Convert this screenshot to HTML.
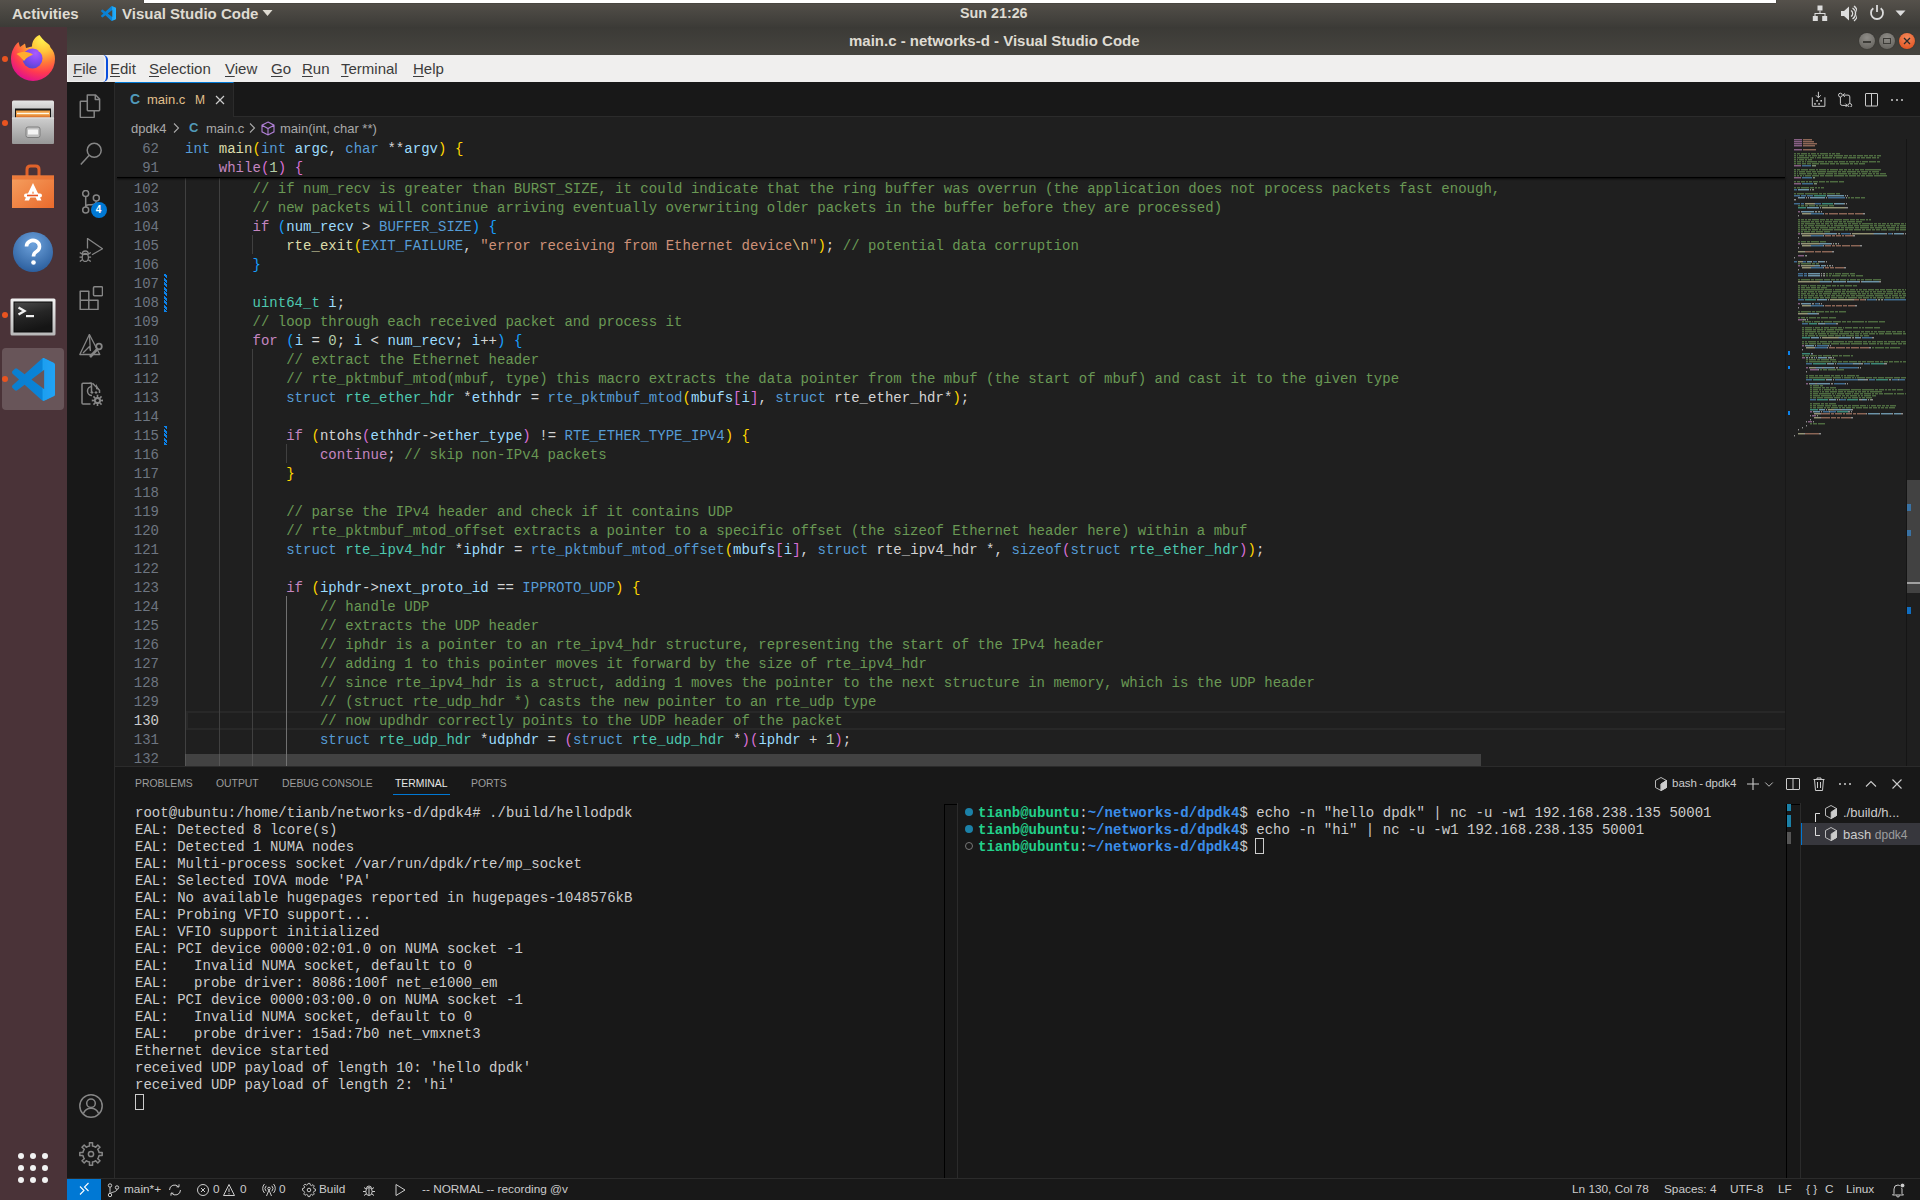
<!DOCTYPE html><html><head><meta charset="utf-8"><style>
*{margin:0;padding:0;box-sizing:border-box}
body{width:1920px;height:1200px;overflow:hidden;background:#1f1f1f;position:relative;font-family:"Liberation Sans",sans-serif}
.a{position:absolute}
.ln{position:absolute;left:118px;width:41px;text-align:right;font-family:"Liberation Mono",monospace;font-size:14px;line-height:19px;height:19px;white-space:pre}
.cl{position:absolute;left:185px;font-family:"Liberation Mono",monospace;font-size:14px;line-height:19px;height:19px;white-space:pre;letter-spacing:0.03px}
.tl{position:absolute;font-family:"Liberation Mono",monospace;font-size:14px;line-height:17px;height:17px;white-space:pre;color:#cccccc;letter-spacing:0.03px}
.ig{position:absolute;width:1px;background:#404040}
</style></head><body>
<div class="a" style="left:0;top:0;width:1920px;height:27px;background:linear-gradient(#55514b,#3c3b37)"></div>
<div class="a" style="left:144px;top:0;width:1632px;height:3px;background:#ffffff;box-shadow:0 0 1px #000"></div>
<div class="a" style="left:12px;top:5px;font-size:15px;font-weight:bold;color:#dfdbd2">Activities</div>
<svg class="a" style="left:101px;top:6px" width="15" height="15" viewBox="0 0 100 100"><defs><linearGradient id="vsg" x1="0" y1="0" x2="1" y2="0"><stop offset="0" stop-color="#0a7fd0"/><stop offset="0.7" stop-color="#0a84d8"/><stop offset="0.72" stop-color="#1aa0f0"/><stop offset="1" stop-color="#24b0ff"/></linearGradient></defs><path d="M96.5 10.8L75.9.9c-2.4-1.2-5.2-.7-7.1 1.2L29.4 38 12.2 25c-1.6-1.2-3.8-1.1-5.3.2L1.4 30.2c-1.8 1.7-1.8 4.5 0 6.2L16.3 50 1.4 63.6c-1.8 1.7-1.8 4.5 0 6.2l5.5 5c1.5 1.4 3.7 1.5 5.3.2l17.2-13L68.8 97.9c1.9 1.9 4.7 2.4 7.1 1.2l20.6-9.9c2.2-1 3.5-3.2 3.5-5.6V16.4c0-2.4-1.4-4.6-3.5-5.6zM75 72.7L45.1 50 75 27.3v45.4z" fill="url(#vsg)"/></svg>
<div class="a" style="left:122px;top:5px;font-size:15px;font-weight:bold;color:#dfdbd2">Visual Studio Code</div>
<svg class="a" style="left:262px;top:9px" width="11" height="8" viewBox="0 0 11 8"><path d="M0.5 1h10L5.5 7z" fill="#dfdbd2"/></svg>
<div class="a" style="left:960px;top:5px;font-size:14.3px;font-weight:bold;color:#dfdbd2">Sun 21:26</div>
<svg class="a" style="left:1812px;top:5px" width="16" height="17" viewBox="0 0 16 17" fill="#dcdcdc"><rect x="5.5" y="0.5" width="5" height="5"/><rect x="0.8" y="11" width="5" height="5"/><rect x="10.2" y="11" width="5" height="5"/><path d="M7.5 5.5h1V8h5v3h-1V9h-9v2h-1V8h5z"/></svg>
<svg class="a" style="left:1840px;top:5px" width="17" height="17" viewBox="0 0 17 17" fill="#dcdcdc"><path d="M1 6h3l5-4.5v14L4 11H1z"/><path d="M11 5.5a3.5 3.5 0 0 1 0 6" stroke="#dcdcdc" stroke-width="1.3" fill="none"/><path d="M12.5 3a6.5 6.5 0 0 1 0 11" stroke="#dcdcdc" stroke-width="1.3" fill="none"/><path d="M14 1a9.5 9.5 0 0 1 0 15" stroke="#dcdcdc" stroke-width="1.3" fill="none"/></svg>
<svg class="a" style="left:1869px;top:4px" width="16" height="18" viewBox="0 0 16 18" fill="none" stroke="#dcdcdc" stroke-width="1.8"><path d="M8 1v7"/><path d="M4.3 4.3a6 6 0 1 0 7.4 0"/></svg>
<svg class="a" style="left:1895px;top:10px" width="11" height="7" viewBox="0 0 11 7"><path d="M0.5 0.5h10L5.5 6z" fill="#dcdcdc"/></svg>
<div class="a" style="left:0;top:27px;width:67px;height:1173px;background:#4a3338"></div>
<svg class="a" style="left:5px;top:30px" width="56" height="56" viewBox="0 0 56 56">
<defs><radialGradient id="ff1" cx="0.72" cy="0.08" r="0.95"><stop offset="0" stop-color="#fff44f"/><stop offset="0.3" stop-color="#ffc53a"/><stop offset="0.55" stop-color="#ff7a38"/><stop offset="0.78" stop-color="#ff3a50"/><stop offset="1" stop-color="#e31587"/></radialGradient>
<radialGradient id="ff2" cx="0.65" cy="0.25" r="0.85"><stop offset="0" stop-color="#a95bff"/><stop offset="0.5" stop-color="#8149f0"/><stop offset="1" stop-color="#4d47c9"/></radialGradient></defs>
<path d="M28 51A22 22 0 0 1 6 29C6 22 9 16 13.5 12L15 17L20 13.5L21 18C24 17 26 17 27 16.5C27 11 30 7 34.5 5C38 10 42 13 44.5 15L45.5 17.5C49 21 50 25 50 29A22 22 0 0 1 28 51Z" fill="url(#ff1)"/>
<circle cx="27.5" cy="28.5" r="10" fill="url(#ff2)"/>
<path d="M11.5 24C16 21 22 20.5 28 24.5C25 26 21 27.5 19 31C17 28.5 14.5 26 11.5 24Z" fill="#ffad2f"/>
<path d="M33 21.5C35 20.5 36 21 37 22.5C35 22 34 22 33 21.5Z" fill="#ffc53a"/>
</svg>
<div class="a" style="left:2px;top:56px;width:6px;height:6px;border-radius:3px;background:#e95420"></div>
<svg class="a" style="left:11px;top:100px" width="44" height="45" viewBox="0 0 44 45">
<defs><linearGradient id="fl" x1="0" y1="0" x2="0" y2="1"><stop offset="0" stop-color="#e6e6e6"/><stop offset="1" stop-color="#8c8c8c"/></linearGradient>
<linearGradient id="fd" x1="0" y1="0" x2="0" y2="1"><stop offset="0" stop-color="#cfcfcf"/><stop offset="1" stop-color="#979797"/></linearGradient></defs>
<rect x="1" y="0.5" width="42" height="28" rx="1.5" fill="url(#fl)"/>
<rect x="4" y="8.5" width="36" height="10" fill="#161616"/>
<rect x="5" y="10.5" width="34" height="8" fill="#f0a24a"/><rect x="6" y="12.8" width="32" height="1.3" fill="#fff8e8"/><rect x="5" y="15.5" width="34" height="3" fill="#e07a30"/>
<rect x="1" y="17.5" width="42" height="26.5" rx="1" fill="url(#fd)"/>
<rect x="1" y="17.5" width="42" height="1" fill="#e0e0e0"/>
<rect x="15" y="27" width="14" height="10.5" rx="2" fill="#c0c0c0" stroke="#6e6e6e" stroke-width="0.8"/>
<rect x="17" y="29.5" width="10" height="5" rx="0.5" fill="#f4f4f4"/>
</svg>
<div class="a" style="left:2px;top:120px;width:6px;height:6px;border-radius:3px;background:#e95420"></div>
<svg class="a" style="left:11px;top:163px" width="44" height="46" viewBox="0 0 44 46">
<defs><linearGradient id="sg" x1="0" y1="0" x2="1" y2="1"><stop offset="0" stop-color="#f5a060"/><stop offset="1" stop-color="#ea6a2c"/></linearGradient></defs>
<path d="M16 13V6.5q0-3.5 3.5-3.5h5q3.5 0 3.5 3.5V13" fill="none" stroke="#e0622a" stroke-width="3"/>
<rect x="1" y="12.5" width="42" height="32.5" fill="url(#sg)"/><rect x="1" y="12.5" width="42" height="4" fill="#e86d2e" opacity="0.7"/>
<path d="M22 20L13.5 37.5h4.5L22 28l4 9.5h4.5z" fill="#fff"/>
<rect x="13" y="30.5" width="18" height="4" rx="2" fill="#fff"/><rect x="16" y="31.7" width="11" height="1.6" fill="#e95420"/>
</svg>
<svg class="a" style="left:12px;top:231px" width="42" height="42" viewBox="0 0 42 42">
<defs><radialGradient id="hg" cx="0.5" cy="0.3" r="0.7"><stop offset="0" stop-color="#6ea3dd"/><stop offset="1" stop-color="#2c5f9e"/></radialGradient></defs>
<circle cx="21" cy="21" r="20" fill="url(#hg)"/>
<path d="M14.5 15.5a6.5 6 0 1 1 10 5c-2.5 1.5-3 2.5-3 5" fill="none" stroke="#fff" stroke-width="3.6"/><circle cx="21.5" cy="31.5" r="2.3" fill="#fff"/>
</svg>
<svg class="a" style="left:10px;top:298px" width="46" height="38" viewBox="0 0 46 38">
<defs><linearGradient id="tf" x1="0" y1="0" x2="0" y2="1"><stop offset="0" stop-color="#f2f2f2"/><stop offset="1" stop-color="#b8b8b8"/></linearGradient>
<linearGradient id="ti" x1="0" y1="0" x2="0.3" y2="1"><stop offset="0" stop-color="#4a4a4a"/><stop offset="0.5" stop-color="#262626"/><stop offset="1" stop-color="#151515"/></linearGradient></defs>
<rect x="0.5" y="0.5" width="45" height="37" rx="1.5" fill="url(#tf)"/><rect x="3.5" y="3.5" width="39" height="31" fill="#0a0a0a"/><rect x="4.5" y="4.5" width="37" height="29" fill="url(#ti)"/>
<path d="M8.5 9.5l6 3.5-6 3.5" fill="none" stroke="#f0f0f0" stroke-width="2.3"/><rect x="16" y="17" width="8" height="2.2" fill="#f0f0f0"/>
</svg>
<div class="a" style="left:2px;top:312px;width:6px;height:6px;border-radius:3px;background:#e95420"></div>
<div class="a" style="left:2px;top:348px;width:62px;height:62px;border-radius:4px;background:rgba(255,255,255,0.17)"></div>
<svg class="a" style="left:12px;top:358px" width="43" height="43" viewBox="0 0 100 100"><path d="M96.5 10.8L75.9.9c-2.4-1.2-5.2-.7-7.1 1.2L29.4 38 12.2 25c-1.6-1.2-3.8-1.1-5.3.2L1.4 30.2c-1.8 1.7-1.8 4.5 0 6.2L16.3 50 1.4 63.6c-1.8 1.7-1.8 4.5 0 6.2l5.5 5c1.5 1.4 3.7 1.5 5.3.2l17.2-13L68.8 97.9c1.9 1.9 4.7 2.4 7.1 1.2l20.6-9.9c2.2-1 3.5-3.2 3.5-5.6V16.4c0-2.4-1.4-4.6-3.5-5.6zM75 72.7L45.1 50 75 27.3v45.4z" fill="url(#vsg)"/><path d="M75 0.5L96.5 10.8c2.1 1 3.5 3.2 3.5 5.6v67.2c0 2.4-1.3 4.6-3.5 5.6L75 99.5z" fill="#1f9cf0" opacity="0.6"/></svg>
<div class="a" style="left:2px;top:376px;width:6px;height:6px;border-radius:3px;background:#e95420"></div>
<div class="a" style="left:18px;top:1153px;width:6px;height:6px;border-radius:3px;background:#f2f2f2"></div>
<div class="a" style="left:30px;top:1153px;width:6px;height:6px;border-radius:3px;background:#f2f2f2"></div>
<div class="a" style="left:42px;top:1153px;width:6px;height:6px;border-radius:3px;background:#f2f2f2"></div>
<div class="a" style="left:18px;top:1165px;width:6px;height:6px;border-radius:3px;background:#f2f2f2"></div>
<div class="a" style="left:30px;top:1165px;width:6px;height:6px;border-radius:3px;background:#f2f2f2"></div>
<div class="a" style="left:42px;top:1165px;width:6px;height:6px;border-radius:3px;background:#f2f2f2"></div>
<div class="a" style="left:18px;top:1177px;width:6px;height:6px;border-radius:3px;background:#f2f2f2"></div>
<div class="a" style="left:30px;top:1177px;width:6px;height:6px;border-radius:3px;background:#f2f2f2"></div>
<div class="a" style="left:42px;top:1177px;width:6px;height:6px;border-radius:3px;background:#f2f2f2"></div>
<div class="a" style="left:67px;top:27px;width:1853px;height:28px;background:linear-gradient(#3b3a36,#46443f)"></div>
<div class="a" style="left:849px;top:32px;font-size:15px;font-weight:bold;color:#dfdbd2">main.c - networks-d - Visual Studio Code</div>
<div class="a" style="left:1859px;top:33px;width:16px;height:16px;border-radius:8px;background:radial-gradient(circle at 50% 30%,#8f8d88,#5f5d58);box-shadow:0 0 1px #222"></div>
<div class="a" style="left:1879px;top:33px;width:16px;height:16px;border-radius:8px;background:radial-gradient(circle at 50% 30%,#8f8d88,#5f5d58);box-shadow:0 0 1px #222"></div>
<div class="a" style="left:1899px;top:33px;width:16px;height:16px;border-radius:8px;background:radial-gradient(circle at 50% 30%,#f58a5c,#df4a16);box-shadow:0 0 1px #222"></div>
<div class="a" style="left:1863px;top:41px;width:8px;height:1.5px;background:#3c3b37"></div>
<div class="a" style="left:1883px;top:38px;width:8px;height:6px;border:1.3px solid #3c3b37"></div>
<svg class="a" style="left:1903px;top:37px" width="8" height="8" viewBox="0 0 8 8"><path d="M1 1l6 6M7 1L1 7" stroke="#2a2a2a" stroke-width="1.3"/></svg>
<div class="a" style="left:67px;top:55px;width:1853px;height:27px;background:#f0efee"></div>
<div class="a" style="left:68px;top:56px;width:36px;height:25px;background:#e3e3e3;border-radius:2px"></div>
<div class="a" style="left:102px;top:55px;width:6px;height:27px;border-right:2.5px solid #0a4fdc;border-radius:0 5px 5px 0"></div>
<div class="a" style="left:73px;top:60px;font-size:15px;color:#3c3c3c"><span style="text-decoration:underline;text-underline-offset:2px;text-decoration-thickness:1px">F</span>ile</div>
<div class="a" style="left:110px;top:60px;font-size:15px;color:#3c3c3c"><span style="text-decoration:underline;text-underline-offset:2px;text-decoration-thickness:1px">E</span>dit</div>
<div class="a" style="left:149px;top:60px;font-size:15px;color:#3c3c3c"><span style="text-decoration:underline;text-underline-offset:2px;text-decoration-thickness:1px">S</span>election</div>
<div class="a" style="left:225px;top:60px;font-size:15px;color:#3c3c3c"><span style="text-decoration:underline;text-underline-offset:2px;text-decoration-thickness:1px">V</span>iew</div>
<div class="a" style="left:271px;top:60px;font-size:15px;color:#3c3c3c"><span style="text-decoration:underline;text-underline-offset:2px;text-decoration-thickness:1px">G</span>o</div>
<div class="a" style="left:302px;top:60px;font-size:15px;color:#3c3c3c"><span style="text-decoration:underline;text-underline-offset:2px;text-decoration-thickness:1px">R</span>un</div>
<div class="a" style="left:341px;top:60px;font-size:15px;color:#3c3c3c"><span style="text-decoration:underline;text-underline-offset:2px;text-decoration-thickness:1px">T</span>erminal</div>
<div class="a" style="left:413px;top:60px;font-size:15px;color:#3c3c3c"><span style="text-decoration:underline;text-underline-offset:2px;text-decoration-thickness:1px">H</span>elp</div>
<div class="a" style="left:67px;top:82px;width:48px;height:1097px;background:#181818;border-right:1px solid #2b2b2b"></div>
<svg class="a" style="left:79px;top:94px" width="24" height="24" viewBox="0 0 24 24" fill="none" stroke="#868686" stroke-width="1.5" stroke-linejoin="round"><path d="M8.3 1h8.3l4 4v11.1q0 .6-.6.6H8.9q-.6 0-.6-.6V1.6q0-.6.6-.6z"/><path d="M16.3 1v4.5h4.3"/><path d="M8.3 7.2H2q-.7 0-.7.7v14.9q0 .7.7.7h12.5q.7 0 .7-.7v-6"/></svg>
<svg class="a" style="left:79px;top:142px" width="24" height="24" viewBox="0 0 24 24" fill="none" stroke="#868686" stroke-width="1.5" stroke-linejoin="round"><circle cx="15.2" cy="8.3" r="7"/><path d="M10.2 13.3L1.8 22.5"/></svg>
<svg class="a" style="left:79px;top:190px" width="24" height="24" viewBox="0 0 24 24" fill="none" stroke="#868686" stroke-width="1.5" stroke-linejoin="round"><circle cx="6.7" cy="3.5" r="3"/><circle cx="17.3" cy="8" r="3"/><circle cx="6.7" cy="20" r="3"/><path d="M6.7 6.5v10.5M17.3 11c0 3-1.5 3.7-5 3.7h-2.5q-3 0-3.1 2.3"/></svg>
<div class="a" style="left:90.5px;top:202px;width:16px;height:16px;border-radius:8px;background:#0078d4;color:#fff;font-size:10px;font-weight:bold;text-align:center;line-height:16px">4</div>
<svg class="a" style="left:79px;top:238px" width="24" height="24" viewBox="0 0 24 24" fill="none" stroke="#868686" stroke-width="1.3" stroke-linejoin="round"><path d="M8.5 10.5V0.5l15 10.3-10.5 6"/><path d="M3.3 16a3 3 0 0 1 6 0"/><ellipse cx="6.3" cy="19.5" rx="3.1" ry="4"/><path d="M3.3 16.3h6M0.8 14.5l2.5 1.8M11.8 14.5l-2.5 1.8M0.5 19.2h2.8M9.3 19.2h2.8M0.8 23.5l2.5-1.8M11.8 23.5l-2.5-1.8"/></svg>
<svg class="a" style="left:79px;top:286px" width="24" height="24" viewBox="0 0 24 24" fill="none" stroke="#868686" stroke-width="1.5" stroke-linejoin="round"><path d="M1.2 5.2h8.6v18.3H1.2z M1.2 14.3h17.8v9.2H9.8 M9.8 14.3v9.2"/><rect x="14.5" y="0.8" width="9" height="9" rx="1"/></svg>
<svg class="a" style="left:79px;top:334px" width="24" height="24" viewBox="0 0 24 24" fill="none" stroke="#868686" stroke-width="1.3" stroke-linejoin="round"><path d="M10.4 0.5L0.8 20.5h20z"/><path d="M10.4 0.5l1 16.5M4 19l6.5-6.5 1 4.5"/><path d="M11 23l8-8.5" stroke-width="2.6"/><circle cx="20" cy="12.5" r="2.8" stroke-width="1.8"/></svg>
<svg class="a" style="left:79px;top:382px" width="24" height="24" viewBox="0 0 24 24" fill="none" stroke="#868686" stroke-width="1.5" stroke-linejoin="round"><path d="M12.5 11V1.3H4q-1 0-1 1v18.8q0 1 1 1h7.5"/><path d="M12.5 1.3h-2M13.5 1.3l7 7V11"/><path d="M17 1.8v5.5h3" fill="#868686" stroke="none"/><path d="M14.8 7.5L20.3 1.5" stroke="none"/><path d="M16.5 3.5a4.5 4.5 0 1 0 0 9" transform="translate(-3.5,1)"/><path d="M11.6 10.5h2.8M13 9.1v2.8M15.6 10.5h2.8M17 9.1v2.8" stroke-width="1.1"/><path d="M17.44 15.06 L17.80 14.97 L17.59 12.77 L19.41 12.77 L19.20 14.97 L19.56 15.06 L20.18 15.32 L20.50 15.51 L21.91 13.81 L23.19 15.09 L21.49 16.50 L21.68 16.82 L21.94 17.44 L22.03 17.80 L24.23 17.59 L24.23 19.41 L22.03 19.20 L21.94 19.56 L21.68 20.18 L21.49 20.50 L23.19 21.91 L21.91 23.19 L20.50 21.49 L20.18 21.68 L19.56 21.94 L19.20 22.03 L19.41 24.23 L17.59 24.23 L17.80 22.03 L17.44 21.94 L16.82 21.68 L16.50 21.49 L15.09 23.19 L13.81 21.91 L15.51 20.50 L15.32 20.18 L15.06 19.56 L14.97 19.20 L12.77 19.41 L12.77 17.59 L14.97 17.80 L15.06 17.44 L15.32 16.82 L15.51 16.50 L13.81 15.09 L15.09 13.81 L16.50 15.51 L16.82 15.32Z" fill="#868686" stroke="none"/><circle cx="18.5" cy="18.5" r="1.6" fill="#181818" stroke="none"/></svg>
<svg class="a" style="left:79px;top:1094px" width="24" height="24" viewBox="0 0 24 24" fill="none" stroke="#868686" stroke-width="1.5" stroke-linejoin="round"><circle cx="12" cy="12" r="11.2"/><circle cx="12" cy="9.3" r="4.3"/><path d="M4.3 19.8c1.3-3.3 4.3-5.5 7.7-5.5s6.4 2.2 7.7 5.5"/></svg>
<svg class="a" style="left:79px;top:1142px" width="24" height="24" viewBox="0 0 24 24" fill="none" stroke="#868686" stroke-width="1.5" stroke-linejoin="round"><path d="M9.59 4.16 L10.56 3.93 L10.41 0.81 L13.59 0.81 L13.44 3.93 L14.41 4.16 L15.84 4.75 L16.69 5.27 L18.78 2.96 L21.04 5.22 L18.73 7.31 L19.25 8.16 L19.84 9.59 L20.07 10.56 L23.19 10.41 L23.19 13.59 L20.07 13.44 L19.84 14.41 L19.25 15.84 L18.73 16.69 L21.04 18.78 L18.78 21.04 L16.69 18.73 L15.84 19.25 L14.41 19.84 L13.44 20.07 L13.59 23.19 L10.41 23.19 L10.56 20.07 L9.59 19.84 L8.16 19.25 L7.31 18.73 L5.22 21.04 L2.96 18.78 L5.27 16.69 L4.75 15.84 L4.16 14.41 L3.93 13.44 L0.81 13.59 L0.81 10.41 L3.93 10.56 L4.16 9.59 L4.75 8.16 L5.27 7.31 L2.96 5.22 L5.22 2.96 L7.31 5.27 L8.16 4.75Z"/><circle cx="12" cy="12" r="2.6"/></svg>
<div class="a" style="left:115px;top:82px;width:1805px;height:35px;background:#181818;border-bottom:1px solid #2b2b2b"></div>
<div class="a" style="left:115px;top:82px;width:119px;height:35px;background:#1f1f1f;border-top:1px solid #0078d4;border-right:1px solid #2b2b2b"></div>
<div class="a" style="left:115px;top:117px;width:1805px;height:649px;background:#1f1f1f"></div>
<div class="a" style="left:130px;top:91px;font-size:14px;font-weight:bold;color:#519aba">C</div>
<div class="a" style="left:147px;top:92px;font-size:13px;color:#e2c08d">main.c</div>
<div class="a" style="left:195px;top:93px;font-size:12px;color:#e2c08d">M</div>
<svg class="a" style="left:212px;top:92px" width="16" height="16" viewBox="0 0 16 16"><path d="M4 4L12 12M12 4L4 12" stroke="#cccccc" stroke-width="1.2"/></svg>
<svg class="a" style="left:1810px;top:91px" width="16" height="16" viewBox="0 0 16 16" fill="none" stroke="#cccccc" stroke-width="1"><path d="M8.4 0.8v6M6 4.3l2.4 2.4 2.4-2.4M2.3 6.3v9h12.6v-9"/><g fill="#cccccc" stroke="none"><rect x="6.3" y="9" width="1.6" height="1.6"/><rect x="10.4" y="9" width="1.6" height="1.6"/><rect x="4.2" y="12.1" width="1.6" height="1.6"/><rect x="8.3" y="12.1" width="1.6" height="1.6"/></g></svg>
<svg class="a" style="left:1837px;top:91px" width="16" height="16" viewBox="0 0 16 16" fill="none" stroke="#cccccc" stroke-width="1"><circle cx="3.4" cy="4.1" r="1.9"/><circle cx="12.8" cy="14.4" r="1.9"/><path d="M3.4 6V12.6q0 1.8 1.8 1.8H10.2M8.4 12.6l1.8 1.8-1.8 1.8M12.8 12.5V5.9q0-1.8-1.8-1.8H6M7.8 2.3L6 4.1l1.8 1.8"/></svg>
<svg class="a" style="left:1863px;top:91px" width="16" height="16" viewBox="0 0 16 16" fill="none" stroke="#cccccc" stroke-width="1"><rect x="2.5" y="2.5" width="12" height="12.5" rx="0.5"/><path d="M8.5 2.5v12.5"/></svg>
<svg class="a" style="left:1889px;top:91px" width="16" height="16" viewBox="0 0 16 16" fill="#cccccc"><circle cx="3" cy="9" r="1"/><circle cx="8" cy="9" r="1"/><circle cx="13" cy="9" r="1"/></svg>
<div class="a" style="left:131px;top:121px;font-size:13px;color:#a9a9a9">dpdk4</div>
<svg class="a" style="left:168px;top:120px" width="16" height="16" viewBox="0 0 16 16" fill="none" stroke="#a9a9a9" stroke-width="1.1"><path d="M6 3.5l4.5 4.5-4.5 4.5"/></svg>
<div class="a" style="left:189px;top:120px;font-size:13px;font-weight:bold;color:#519aba">C</div>
<div class="a" style="left:206px;top:121px;font-size:13px;color:#a9a9a9">main.c</div>
<svg class="a" style="left:244px;top:120px" width="16" height="16" viewBox="0 0 16 16" fill="none" stroke="#a9a9a9" stroke-width="1.1"><path d="M6 3.5l4.5 4.5-4.5 4.5"/></svg>
<svg class="a" style="left:261px;top:121px" width="14" height="15" viewBox="0 0 14 15" fill="none" stroke="#b180d7" stroke-width="1.1"><path d="M7 1L13 4.2V10.8L7 14L1 10.8V4.2Z M1 4.2L7 7.5L13 4.2 M7 7.5V14"/></svg>
<div class="a" style="left:280px;top:121px;font-size:13px;color:#a9a9a9">main(int, char **)</div>
<div class="ln" style="top:140px;color:#6e7681">62</div><div class="cl" style="top:140px"><span style="color:#569CD6">int</span><span style="color:#D4D4D4"> </span><span style="color:#DCDCAA">main</span><span style="color:#FFD700">(</span><span style="color:#569CD6">int</span><span style="color:#D4D4D4"> </span><span style="color:#9CDCFE">argc</span><span style="color:#D4D4D4">, </span><span style="color:#569CD6">char</span><span style="color:#D4D4D4"> **</span><span style="color:#9CDCFE">argv</span><span style="color:#FFD700">)</span><span style="color:#D4D4D4"> </span><span style="color:#FFD700">{</span></div>
<div class="ln" style="top:159px;color:#6e7681">91</div><div class="cl" style="top:159px"><span style="color:#D4D4D4">    </span><span style="color:#C586C0">while</span><span style="color:#DA70D6">(</span><span style="color:#B5CEA8">1</span><span style="color:#DA70D6">)</span><span style="color:#D4D4D4"> </span><span style="color:#DA70D6">{</span></div>
<div class="a" style="left:186px;top:711px;width:1600px;height:19px;border:2px solid #282828;border-right:none"></div>
<div class="ig" style="left:185px;top:178px;height:19px;background:#404040"></div>
<div class="ig" style="left:219px;top:178px;height:19px;background:#404040"></div>
<div class="ig" style="left:185px;top:197px;height:19px;background:#404040"></div>
<div class="ig" style="left:219px;top:197px;height:19px;background:#404040"></div>
<div class="ig" style="left:185px;top:216px;height:19px;background:#404040"></div>
<div class="ig" style="left:219px;top:216px;height:19px;background:#404040"></div>
<div class="ig" style="left:185px;top:235px;height:19px;background:#404040"></div>
<div class="ig" style="left:219px;top:235px;height:19px;background:#404040"></div>
<div class="ig" style="left:252px;top:235px;height:19px;background:#404040"></div>
<div class="ig" style="left:185px;top:254px;height:19px;background:#404040"></div>
<div class="ig" style="left:219px;top:254px;height:19px;background:#404040"></div>
<div class="ig" style="left:185px;top:273px;height:19px;background:#404040"></div>
<div class="ig" style="left:219px;top:273px;height:19px;background:#404040"></div>
<div class="ig" style="left:185px;top:292px;height:19px;background:#404040"></div>
<div class="ig" style="left:219px;top:292px;height:19px;background:#404040"></div>
<div class="ig" style="left:185px;top:311px;height:19px;background:#404040"></div>
<div class="ig" style="left:219px;top:311px;height:19px;background:#404040"></div>
<div class="ig" style="left:185px;top:330px;height:19px;background:#404040"></div>
<div class="ig" style="left:219px;top:330px;height:19px;background:#404040"></div>
<div class="ig" style="left:185px;top:349px;height:19px;background:#404040"></div>
<div class="ig" style="left:219px;top:349px;height:19px;background:#404040"></div>
<div class="ig" style="left:252px;top:349px;height:19px;background:#404040"></div>
<div class="ig" style="left:185px;top:368px;height:19px;background:#404040"></div>
<div class="ig" style="left:219px;top:368px;height:19px;background:#404040"></div>
<div class="ig" style="left:252px;top:368px;height:19px;background:#404040"></div>
<div class="ig" style="left:185px;top:387px;height:19px;background:#404040"></div>
<div class="ig" style="left:219px;top:387px;height:19px;background:#404040"></div>
<div class="ig" style="left:252px;top:387px;height:19px;background:#404040"></div>
<div class="ig" style="left:185px;top:406px;height:19px;background:#404040"></div>
<div class="ig" style="left:219px;top:406px;height:19px;background:#404040"></div>
<div class="ig" style="left:252px;top:406px;height:19px;background:#404040"></div>
<div class="ig" style="left:185px;top:425px;height:19px;background:#404040"></div>
<div class="ig" style="left:219px;top:425px;height:19px;background:#404040"></div>
<div class="ig" style="left:252px;top:425px;height:19px;background:#404040"></div>
<div class="ig" style="left:185px;top:444px;height:19px;background:#404040"></div>
<div class="ig" style="left:219px;top:444px;height:19px;background:#404040"></div>
<div class="ig" style="left:252px;top:444px;height:19px;background:#404040"></div>
<div class="ig" style="left:286px;top:444px;height:19px;background:#404040"></div>
<div class="ig" style="left:185px;top:463px;height:19px;background:#404040"></div>
<div class="ig" style="left:219px;top:463px;height:19px;background:#404040"></div>
<div class="ig" style="left:252px;top:463px;height:19px;background:#404040"></div>
<div class="ig" style="left:185px;top:482px;height:19px;background:#404040"></div>
<div class="ig" style="left:219px;top:482px;height:19px;background:#404040"></div>
<div class="ig" style="left:252px;top:482px;height:19px;background:#404040"></div>
<div class="ig" style="left:185px;top:501px;height:19px;background:#404040"></div>
<div class="ig" style="left:219px;top:501px;height:19px;background:#404040"></div>
<div class="ig" style="left:252px;top:501px;height:19px;background:#404040"></div>
<div class="ig" style="left:185px;top:520px;height:19px;background:#404040"></div>
<div class="ig" style="left:219px;top:520px;height:19px;background:#404040"></div>
<div class="ig" style="left:252px;top:520px;height:19px;background:#404040"></div>
<div class="ig" style="left:185px;top:539px;height:19px;background:#404040"></div>
<div class="ig" style="left:219px;top:539px;height:19px;background:#404040"></div>
<div class="ig" style="left:252px;top:539px;height:19px;background:#404040"></div>
<div class="ig" style="left:185px;top:558px;height:19px;background:#404040"></div>
<div class="ig" style="left:219px;top:558px;height:19px;background:#404040"></div>
<div class="ig" style="left:252px;top:558px;height:19px;background:#404040"></div>
<div class="ig" style="left:185px;top:577px;height:19px;background:#404040"></div>
<div class="ig" style="left:219px;top:577px;height:19px;background:#404040"></div>
<div class="ig" style="left:252px;top:577px;height:19px;background:#404040"></div>
<div class="ig" style="left:185px;top:596px;height:19px;background:#404040"></div>
<div class="ig" style="left:219px;top:596px;height:19px;background:#404040"></div>
<div class="ig" style="left:252px;top:596px;height:19px;background:#404040"></div>
<div class="ig" style="left:286px;top:596px;height:19px;background:#707070"></div>
<div class="ig" style="left:185px;top:615px;height:19px;background:#404040"></div>
<div class="ig" style="left:219px;top:615px;height:19px;background:#404040"></div>
<div class="ig" style="left:252px;top:615px;height:19px;background:#404040"></div>
<div class="ig" style="left:286px;top:615px;height:19px;background:#707070"></div>
<div class="ig" style="left:185px;top:634px;height:19px;background:#404040"></div>
<div class="ig" style="left:219px;top:634px;height:19px;background:#404040"></div>
<div class="ig" style="left:252px;top:634px;height:19px;background:#404040"></div>
<div class="ig" style="left:286px;top:634px;height:19px;background:#707070"></div>
<div class="ig" style="left:185px;top:653px;height:19px;background:#404040"></div>
<div class="ig" style="left:219px;top:653px;height:19px;background:#404040"></div>
<div class="ig" style="left:252px;top:653px;height:19px;background:#404040"></div>
<div class="ig" style="left:286px;top:653px;height:19px;background:#707070"></div>
<div class="ig" style="left:185px;top:672px;height:19px;background:#404040"></div>
<div class="ig" style="left:219px;top:672px;height:19px;background:#404040"></div>
<div class="ig" style="left:252px;top:672px;height:19px;background:#404040"></div>
<div class="ig" style="left:286px;top:672px;height:19px;background:#707070"></div>
<div class="ig" style="left:185px;top:691px;height:19px;background:#404040"></div>
<div class="ig" style="left:219px;top:691px;height:19px;background:#404040"></div>
<div class="ig" style="left:252px;top:691px;height:19px;background:#404040"></div>
<div class="ig" style="left:286px;top:691px;height:19px;background:#707070"></div>
<div class="ig" style="left:185px;top:710px;height:19px;background:#404040"></div>
<div class="ig" style="left:219px;top:710px;height:19px;background:#404040"></div>
<div class="ig" style="left:252px;top:710px;height:19px;background:#404040"></div>
<div class="ig" style="left:286px;top:710px;height:19px;background:#707070"></div>
<div class="ig" style="left:185px;top:729px;height:19px;background:#404040"></div>
<div class="ig" style="left:219px;top:729px;height:19px;background:#404040"></div>
<div class="ig" style="left:252px;top:729px;height:19px;background:#404040"></div>
<div class="ig" style="left:286px;top:729px;height:19px;background:#707070"></div>
<div class="ig" style="left:185px;top:748px;height:19px;background:#404040"></div>
<div class="ig" style="left:219px;top:748px;height:19px;background:#404040"></div>
<div class="ig" style="left:252px;top:748px;height:19px;background:#404040"></div>
<div class="ig" style="left:286px;top:748px;height:19px;background:#707070"></div>
<div class="ln" style="top:180px;color:#6e7681">102</div><div class="cl" style="top:180px"><span style="color:#D4D4D4">        </span><span style="color:#6A9955">// if num_recv is greater than BURST_SIZE, it could indicate that the ring buffer was overrun (the application does not process packets fast enough,</span></div>
<div class="ln" style="top:199px;color:#6e7681">103</div><div class="cl" style="top:199px"><span style="color:#D4D4D4">        </span><span style="color:#6A9955">// new packets will continue arriving eventually overwriting older packets in the buffer before they are processed)</span></div>
<div class="ln" style="top:218px;color:#6e7681">104</div><div class="cl" style="top:218px"><span style="color:#D4D4D4">        </span><span style="color:#C586C0">if</span><span style="color:#D4D4D4"> </span><span style="color:#179FFF">(</span><span style="color:#9CDCFE">num_recv</span><span style="color:#D4D4D4"> &gt; </span><span style="color:#569CD6">BUFFER_SIZE</span><span style="color:#179FFF">)</span><span style="color:#D4D4D4"> </span><span style="color:#179FFF">{</span></div>
<div class="ln" style="top:237px;color:#6e7681">105</div><div class="cl" style="top:237px"><span style="color:#D4D4D4">            </span><span style="color:#DCDCAA">rte_exit</span><span style="color:#FFD700">(</span><span style="color:#569CD6">EXIT_FAILURE</span><span style="color:#D4D4D4">, </span><span style="color:#CE9178">&quot;error receiving from Ethernet device</span><span style="color:#D7BA7D">\n</span><span style="color:#CE9178">&quot;</span><span style="color:#FFD700">)</span><span style="color:#D4D4D4">; </span><span style="color:#6A9955">// potential data corruption</span></div>
<div class="ln" style="top:256px;color:#6e7681">106</div><div class="cl" style="top:256px"><span style="color:#D4D4D4">        </span><span style="color:#179FFF">}</span></div>
<div class="ln" style="top:275px;color:#6e7681">107</div><div class="cl" style="top:275px"></div>
<div class="ln" style="top:294px;color:#6e7681">108</div><div class="cl" style="top:294px"><span style="color:#D4D4D4">        </span><span style="color:#4EC9B0">uint64_t</span><span style="color:#D4D4D4"> </span><span style="color:#9CDCFE">i</span><span style="color:#D4D4D4">;</span></div>
<div class="ln" style="top:313px;color:#6e7681">109</div><div class="cl" style="top:313px"><span style="color:#D4D4D4">        </span><span style="color:#6A9955">// loop through each received packet and process it</span></div>
<div class="ln" style="top:332px;color:#6e7681">110</div><div class="cl" style="top:332px"><span style="color:#D4D4D4">        </span><span style="color:#C586C0">for</span><span style="color:#D4D4D4"> </span><span style="color:#179FFF">(</span><span style="color:#9CDCFE">i</span><span style="color:#D4D4D4"> = </span><span style="color:#B5CEA8">0</span><span style="color:#D4D4D4">; </span><span style="color:#9CDCFE">i</span><span style="color:#D4D4D4"> &lt; </span><span style="color:#9CDCFE">num_recv</span><span style="color:#D4D4D4">; </span><span style="color:#9CDCFE">i</span><span style="color:#D4D4D4">++</span><span style="color:#179FFF">)</span><span style="color:#D4D4D4"> </span><span style="color:#179FFF">{</span></div>
<div class="ln" style="top:351px;color:#6e7681">111</div><div class="cl" style="top:351px"><span style="color:#D4D4D4">            </span><span style="color:#6A9955">// extract the Ethernet header</span></div>
<div class="ln" style="top:370px;color:#6e7681">112</div><div class="cl" style="top:370px"><span style="color:#D4D4D4">            </span><span style="color:#6A9955">// rte_pktmbuf_mtod(mbuf, type) this macro extracts the data pointer from the mbuf (the start of mbuf) and cast it to the given type</span></div>
<div class="ln" style="top:389px;color:#6e7681">113</div><div class="cl" style="top:389px"><span style="color:#D4D4D4">            </span><span style="color:#569CD6">struct</span><span style="color:#D4D4D4"> </span><span style="color:#4EC9B0">rte_ether_hdr</span><span style="color:#D4D4D4"> *</span><span style="color:#9CDCFE">ethhdr</span><span style="color:#D4D4D4"> = </span><span style="color:#569CD6">rte_pktmbuf_mtod</span><span style="color:#FFD700">(</span><span style="color:#9CDCFE">mbufs</span><span style="color:#DA70D6">[</span><span style="color:#9CDCFE">i</span><span style="color:#DA70D6">]</span><span style="color:#D4D4D4">, </span><span style="color:#569CD6">struct</span><span style="color:#D4D4D4"> rte_ether_hdr*</span><span style="color:#FFD700">)</span><span style="color:#D4D4D4">;</span></div>
<div class="ln" style="top:408px;color:#6e7681">114</div><div class="cl" style="top:408px"></div>
<div class="ln" style="top:427px;color:#6e7681">115</div><div class="cl" style="top:427px"><span style="color:#D4D4D4">            </span><span style="color:#C586C0">if</span><span style="color:#D4D4D4"> </span><span style="color:#FFD700">(</span><span style="color:#D4D4D4">ntohs</span><span style="color:#DA70D6">(</span><span style="color:#9CDCFE">ethhdr</span><span style="color:#D4D4D4">-&gt;</span><span style="color:#9CDCFE">ether_type</span><span style="color:#DA70D6">)</span><span style="color:#D4D4D4"> != </span><span style="color:#569CD6">RTE_ETHER_TYPE_IPV4</span><span style="color:#FFD700">)</span><span style="color:#D4D4D4"> </span><span style="color:#FFD700">{</span></div>
<div class="ln" style="top:446px;color:#6e7681">116</div><div class="cl" style="top:446px"><span style="color:#D4D4D4">                </span><span style="color:#C586C0">continue</span><span style="color:#D4D4D4">; </span><span style="color:#6A9955">// skip non-IPv4 packets</span></div>
<div class="ln" style="top:465px;color:#6e7681">117</div><div class="cl" style="top:465px"><span style="color:#D4D4D4">            </span><span style="color:#FFD700">}</span></div>
<div class="ln" style="top:484px;color:#6e7681">118</div><div class="cl" style="top:484px"></div>
<div class="ln" style="top:503px;color:#6e7681">119</div><div class="cl" style="top:503px"><span style="color:#D4D4D4">            </span><span style="color:#6A9955">// parse the IPv4 header and check if it contains UDP</span></div>
<div class="ln" style="top:522px;color:#6e7681">120</div><div class="cl" style="top:522px"><span style="color:#D4D4D4">            </span><span style="color:#6A9955">// rte_pktmbuf_mtod_offset extracts a pointer to a specific offset (the sizeof Ethernet header here) within a mbuf</span></div>
<div class="ln" style="top:541px;color:#6e7681">121</div><div class="cl" style="top:541px"><span style="color:#D4D4D4">            </span><span style="color:#569CD6">struct</span><span style="color:#D4D4D4"> </span><span style="color:#4EC9B0">rte_ipv4_hdr</span><span style="color:#D4D4D4"> *</span><span style="color:#9CDCFE">iphdr</span><span style="color:#D4D4D4"> = </span><span style="color:#569CD6">rte_pktmbuf_mtod_offset</span><span style="color:#FFD700">(</span><span style="color:#9CDCFE">mbufs</span><span style="color:#DA70D6">[</span><span style="color:#9CDCFE">i</span><span style="color:#DA70D6">]</span><span style="color:#D4D4D4">, </span><span style="color:#569CD6">struct</span><span style="color:#D4D4D4"> rte_ipv4_hdr *, </span><span style="color:#569CD6">sizeof</span><span style="color:#DA70D6">(</span><span style="color:#569CD6">struct</span><span style="color:#D4D4D4"> </span><span style="color:#4EC9B0">rte_ether_hdr</span><span style="color:#DA70D6">)</span><span style="color:#FFD700">)</span><span style="color:#D4D4D4">;</span></div>
<div class="ln" style="top:560px;color:#6e7681">122</div><div class="cl" style="top:560px"></div>
<div class="ln" style="top:579px;color:#6e7681">123</div><div class="cl" style="top:579px"><span style="color:#D4D4D4">            </span><span style="color:#C586C0">if</span><span style="color:#D4D4D4"> </span><span style="color:#FFD700">(</span><span style="color:#9CDCFE">iphdr</span><span style="color:#D4D4D4">-&gt;</span><span style="color:#9CDCFE">next_proto_id</span><span style="color:#D4D4D4"> == </span><span style="color:#569CD6">IPPROTO_UDP</span><span style="color:#FFD700">)</span><span style="color:#D4D4D4"> </span><span style="color:#FFD700">{</span></div>
<div class="ln" style="top:598px;color:#6e7681">124</div><div class="cl" style="top:598px"><span style="color:#D4D4D4">                </span><span style="color:#6A9955">// handle UDP</span></div>
<div class="ln" style="top:617px;color:#6e7681">125</div><div class="cl" style="top:617px"><span style="color:#D4D4D4">                </span><span style="color:#6A9955">// extracts the UDP header</span></div>
<div class="ln" style="top:636px;color:#6e7681">126</div><div class="cl" style="top:636px"><span style="color:#D4D4D4">                </span><span style="color:#6A9955">// iphdr is a pointer to an rte_ipv4_hdr structure, representing the start of the IPv4 header</span></div>
<div class="ln" style="top:655px;color:#6e7681">127</div><div class="cl" style="top:655px"><span style="color:#D4D4D4">                </span><span style="color:#6A9955">// adding 1 to this pointer moves it forward by the size of rte_ipv4_hdr</span></div>
<div class="ln" style="top:674px;color:#6e7681">128</div><div class="cl" style="top:674px"><span style="color:#D4D4D4">                </span><span style="color:#6A9955">// since rte_ipv4_hdr is a struct, adding 1 moves the pointer to the next structure in memory, which is the UDP header</span></div>
<div class="ln" style="top:693px;color:#6e7681">129</div><div class="cl" style="top:693px"><span style="color:#D4D4D4">                </span><span style="color:#6A9955">// (struct rte_udp_hdr *) casts the new pointer to an rte_udp type</span></div>
<div class="ln" style="top:712px;color:#cccccc">130</div><div class="cl" style="top:712px"><span style="color:#D4D4D4">                </span><span style="color:#6A9955">// now updhdr correctly points to the UDP header of the packet</span></div>
<div class="ln" style="top:731px;color:#6e7681">131</div><div class="cl" style="top:731px"><span style="color:#D4D4D4">                </span><span style="color:#569CD6">struct</span><span style="color:#D4D4D4"> </span><span style="color:#4EC9B0">rte_udp_hdr</span><span style="color:#D4D4D4"> *</span><span style="color:#9CDCFE">udphdr</span><span style="color:#D4D4D4"> = </span><span style="color:#DA70D6">(</span><span style="color:#569CD6">struct</span><span style="color:#D4D4D4"> </span><span style="color:#4EC9B0">rte_udp_hdr</span><span style="color:#D4D4D4"> *</span><span style="color:#DA70D6">)(</span><span style="color:#9CDCFE">iphdr</span><span style="color:#D4D4D4"> + </span><span style="color:#B5CEA8">1</span><span style="color:#DA70D6">)</span><span style="color:#D4D4D4">;</span></div>
<div class="ln" style="top:750px;color:#6e7681">132</div><div class="cl" style="top:750px"></div>
<div class="a" style="left:117px;top:177px;width:1669px;height:1px;background:#000;box-shadow:0 1px 2px 0 #000"></div>
<div class="a" style="left:164px;top:274px;width:3px;height:38px;background:repeating-linear-gradient(45deg,#0c82ea 0 2.2px,#1f1f1f 2.2px 3.2px)"></div>
<div class="a" style="left:164px;top:426px;width:3px;height:19px;background:repeating-linear-gradient(45deg,#0c82ea 0 2.2px,#1f1f1f 2.2px 3.2px)"></div>
<svg class="a" style="left:1794px;top:139px" width="112" height="298" viewBox="0 0 112 298"><path fill="#865f83" d="M0 0h8v1h-8zM0 2h8v1h-8zM0 4h8v1h-8zM0 6h8v1h-8zM0 10h8v1h-8zM0 26h7v1h-7zM0 38h7v1h-7zM0 44h7v1h-7zM4 72h2v1h-2zM4 94h2v1h-2zM4 104h2v1h-2zM4 116h6v1h-6zM4 126h2v1h-2zM4 164h2v1h-2zM4 180h5v1h-5zM8 206h2v1h-2zM8 218h3v1h-3zM12 228h2v1h-2zM16 230h8v1h-8zM12 244h2v1h-2zM16 272h2v1h-2zM18 276h4v1h-4zM14 282h4v1h-4z"/><path fill="#4d3c4c" transform="translate(0,1)" d="M0 0h8v1h-8zM0 2h8v1h-8zM0 4h8v1h-8zM0 6h8v1h-8zM0 10h8v1h-8zM0 26h7v1h-7zM0 38h7v1h-7zM0 44h7v1h-7zM4 72h2v1h-2zM4 94h2v1h-2zM4 104h2v1h-2zM4 116h6v1h-6zM4 126h2v1h-2zM4 164h2v1h-2zM4 180h5v1h-5zM8 206h2v1h-2zM8 218h3v1h-3zM12 228h2v1h-2zM16 230h8v1h-8zM12 244h2v1h-2zM16 272h2v1h-2zM18 276h4v1h-4zM14 282h4v1h-4z"/><path fill="#8c6656" d="M9 0h9v1h-9zM9 2h11v1h-11zM9 4h14v1h-14zM9 6h12v1h-12zM9 10h13v1h-13zM31 74h3v1h-3zM35 74h9v1h-9zM45 74h8v1h-8zM54 74h6v1h-6zM61 74h8v1h-8zM31 96h6v1h-6zM38 96h3v1h-3zM42 96h5v1h-5zM48 96h2v1h-2zM51 96h8v1h-8zM31 106h6v1h-6zM38 106h3v1h-3zM42 106h5v1h-5zM48 106h8v1h-8zM57 106h9v1h-9zM11 112h9v1h-9zM21 112h6v1h-6zM28 112h10v1h-10zM31 128h4v1h-4zM36 128h4v1h-4zM41 128h9v1h-9zM60 160h5v1h-5zM66 160h5v1h-5zM31 166h6v1h-6zM38 166h3v1h-3zM42 166h6v1h-6zM49 166h4v1h-4zM54 166h7v1h-7zM35 208h6v1h-6zM42 208h9v1h-9zM52 208h4v1h-4zM57 208h8v1h-8zM66 208h9v1h-9zM27 274h9v1h-9zM37 274h3v1h-3zM41 274h7v1h-7zM49 274h2v1h-2zM52 274h6v1h-6zM59 274h3v1h-3zM63 274h9v1h-9zM27 278h9v1h-9zM37 278h5v1h-5zM43 278h3v1h-3zM47 278h10v1h-10zM11 294h14v1h-14z"/><path fill="#503f38" transform="translate(0,1)" d="M9 0h9v1h-9zM9 2h11v1h-11zM9 4h14v1h-14zM9 6h12v1h-12zM9 10h13v1h-13zM31 74h3v1h-3zM35 74h9v1h-9zM45 74h8v1h-8zM54 74h6v1h-6zM61 74h8v1h-8zM31 96h6v1h-6zM38 96h3v1h-3zM42 96h5v1h-5zM48 96h2v1h-2zM51 96h8v1h-8zM31 106h6v1h-6zM38 106h3v1h-3zM42 106h5v1h-5zM48 106h8v1h-8zM57 106h9v1h-9zM11 112h9v1h-9zM21 112h6v1h-6zM28 112h10v1h-10zM31 128h4v1h-4zM36 128h4v1h-4zM41 128h9v1h-9zM60 160h5v1h-5zM66 160h5v1h-5zM31 166h6v1h-6zM38 166h3v1h-3zM42 166h6v1h-6zM49 166h4v1h-4zM54 166h7v1h-7zM35 208h6v1h-6zM42 208h9v1h-9zM52 208h4v1h-4zM57 208h8v1h-8zM66 208h9v1h-9zM27 274h9v1h-9zM37 274h3v1h-3zM41 274h7v1h-7zM49 274h2v1h-2zM52 274h6v1h-6zM59 274h3v1h-3zM63 274h9v1h-9zM27 278h9v1h-9zM37 278h5v1h-5zM43 278h3v1h-3zM47 278h10v1h-10zM11 294h14v1h-14z"/><path fill="#4e6b40" d="M0 14h2v1h-2zM3 14h3v1h-3zM7 14h6v1h-6zM14 14h2v1h-2zM17 14h5v1h-5zM23 14h2v1h-2zM26 14h8v1h-8zM35 14h2v1h-2zM38 14h3v1h-3zM42 14h4v1h-4zM0 16h2v1h-2zM3 16h1v1h-1zM5 16h5v1h-5zM11 16h2v1h-2zM14 16h3v1h-3zM18 16h5v1h-5zM24 16h3v1h-3zM28 16h2v1h-2zM31 16h3v1h-3zM35 16h4v1h-4zM40 16h9v1h-9zM50 16h4v1h-4zM55 16h3v1h-3zM59 16h3v1h-3zM63 16h6v1h-6zM70 16h4v1h-4zM75 16h4v1h-4zM80 16h2v1h-2zM83 16h4v1h-4zM0 18h2v1h-2zM3 18h12v1h-12zM16 18h4v1h-4zM21 18h1v1h-1zM23 18h4v1h-4zM28 18h10v1h-10zM39 18h2v1h-2zM42 18h6v1h-6zM49 18h4v1h-4zM54 18h8v1h-8zM63 18h3v1h-3zM67 18h4v1h-4zM72 18h5v1h-5zM78 18h4v1h-4zM83 18h2v1h-2zM0 20h2v1h-2zM3 20h1v1h-1zM5 20h5v1h-5zM11 20h2v1h-2zM14 20h4v1h-4zM0 22h2v1h-2zM3 22h4v1h-4zM8 22h2v1h-2zM11 22h1v1h-1zM13 22h10v1h-10zM24 22h6v1h-6zM31 22h2v1h-2zM34 22h5v1h-5zM40 22h4v1h-4zM45 22h6v1h-6zM52 22h2v1h-2zM55 22h6v1h-6zM62 22h3v1h-3zM66 22h1v1h-1zM68 22h6v1h-6zM75 22h7v1h-7zM83 22h3v1h-3zM0 24h2v1h-2zM3 24h4v1h-4zM8 24h4v1h-4zM13 24h4v1h-4zM18 24h7v1h-7zM26 24h9v1h-9zM36 24h5v1h-5zM42 24h3v1h-3zM46 24h9v1h-9zM56 24h3v1h-3zM60 24h4v1h-4zM65 24h6v1h-6zM0 30h2v1h-2zM3 30h3v1h-3zM7 30h7v1h-7zM15 30h6v1h-6zM22 30h2v1h-2zM25 30h7v1h-7zM33 30h2v1h-2zM36 30h8v1h-8zM45 30h4v1h-4zM50 30h3v1h-3zM54 30h3v1h-3zM58 30h2v1h-2zM61 30h4v1h-4zM66 30h4v1h-4zM71 30h16v1h-16zM0 32h2v1h-2zM3 32h1v1h-1zM5 32h6v1h-6zM12 32h5v1h-5zM18 32h4v1h-4zM23 32h9v1h-9zM33 32h10v1h-10zM44 32h3v1h-3zM48 32h4v1h-4zM53 32h9v1h-9zM63 32h3v1h-3zM67 32h7v1h-7zM75 32h2v1h-2zM78 32h7v1h-7zM0 34h2v1h-2zM3 34h1v1h-1zM5 34h7v1h-7zM13 34h5v1h-5zM19 34h4v1h-4zM24 34h7v1h-7zM32 34h7v1h-7zM40 34h3v1h-3zM44 34h9v1h-9zM54 34h3v1h-3zM58 34h6v1h-6zM65 34h2v1h-2zM68 34h5v1h-5zM74 34h4v1h-4zM79 34h2v1h-2zM82 34h3v1h-3zM86 34h6v1h-6zM0 36h2v1h-2zM3 36h2v1h-2zM6 36h2v1h-2zM9 36h1v1h-1zM11 36h6v1h-6zM18 36h7v1h-7zM26 36h4v1h-4zM31 36h8v1h-8zM40 36h10v1h-10zM51 36h3v1h-3zM55 36h7v1h-7zM63 36h3v1h-3zM67 36h4v1h-4zM72 36h7v1h-7zM80 36h13v1h-13zM0 42h2v1h-2zM3 42h3v1h-3zM7 42h4v1h-4zM12 42h2v1h-2zM15 42h3v1h-3zM19 42h5v1h-5zM25 42h6v1h-6zM32 42h3v1h-3zM36 42h8v1h-8zM45 42h5v1h-5zM0 48h2v1h-2zM3 48h3v1h-3zM7 48h8v1h-8zM16 48h4v1h-4zM21 48h2v1h-2zM24 48h2v1h-2zM27 48h3v1h-3zM0 54h2v1h-2zM3 54h7v1h-7zM11 54h13v1h-13zM25 54h3v1h-3zM29 54h3v1h-3zM33 54h8v1h-8zM42 54h4v1h-4zM54 58h2v1h-2zM57 58h3v1h-3zM61 58h5v1h-5zM67 58h4v1h-4zM4 66h2v1h-2zM7 66h3v1h-3zM11 66h3v1h-3zM15 66h6v1h-6zM22 66h2v1h-2zM25 66h9v1h-9zM35 66h5v1h-5zM4 80h2v1h-2zM7 80h3v1h-3zM11 80h2v1h-2zM14 80h3v1h-3zM18 80h7v1h-7zM26 80h5v1h-5zM32 80h3v1h-3zM36 80h3v1h-3zM40 80h8v1h-8zM49 80h6v1h-6zM56 80h5v1h-5zM62 80h3v1h-3zM66 80h5v1h-5zM72 80h2v1h-2zM75 80h2v1h-2zM4 82h2v1h-2zM7 82h9v1h-9zM17 82h3v1h-3zM21 82h4v1h-4zM26 82h2v1h-2zM29 82h1v1h-1zM31 82h7v1h-7zM39 82h5v1h-5zM45 82h3v1h-3zM49 82h3v1h-3zM53 82h8v1h-8zM62 82h6v1h-6zM4 84h2v1h-2zM7 84h3v1h-3zM11 84h10v1h-10zM22 84h4v1h-4zM27 84h3v1h-3zM31 84h4v1h-4zM36 84h3v1h-3zM40 84h3v1h-3zM44 84h5v1h-5zM50 84h3v1h-3zM54 84h3v1h-3zM58 84h6v1h-6zM65 84h2v1h-2zM68 84h11v1h-11zM80 84h3v1h-3zM84 84h3v1h-3zM88 84h4v1h-4zM93 84h2v1h-2zM96 84h3v1h-3zM100 84h6v1h-6zM107 84h3v1h-3zM111 84h1v1h-1zM4 86h2v1h-2zM7 86h2v1h-2zM10 86h3v1h-3zM14 86h6v1h-6zM21 86h11v1h-11zM33 86h3v1h-3zM37 86h2v1h-2zM40 86h13v1h-13zM54 86h5v1h-5zM60 86h5v1h-5zM66 86h9v1h-9zM76 86h3v1h-3zM80 86h3v1h-3zM84 86h7v1h-7zM92 86h4v1h-4zM97 86h5v1h-5zM103 86h2v1h-2zM106 86h6v1h-6zM4 88h2v1h-2zM7 88h3v1h-3zM11 88h5v1h-5zM17 88h4v1h-4zM22 88h3v1h-3zM26 88h8v1h-8zM35 88h7v1h-7zM43 88h3v1h-3zM47 88h3v1h-3zM51 88h9v1h-9zM61 88h4v1h-4zM66 88h9v1h-9zM76 88h4v1h-4zM81 88h7v1h-7zM89 88h3v1h-3zM93 88h8v1h-8zM102 88h3v1h-3zM106 88h6v1h-6zM4 90h2v1h-2zM7 90h6v1h-6zM14 90h3v1h-3zM18 90h6v1h-6zM25 90h2v1h-2zM28 90h11v1h-11zM40 90h10v1h-10zM51 90h3v1h-3zM55 90h4v1h-4zM60 90h7v1h-7zM68 90h3v1h-3zM72 90h5v1h-5zM78 90h3v1h-3zM82 90h4v1h-4zM87 90h6v1h-6zM94 90h7v1h-7zM102 90h3v1h-3zM106 90h6v1h-6zM4 92h2v1h-2zM7 92h2v1h-2zM10 92h6v1h-6zM17 92h4v1h-4zM22 92h7v1h-7zM30 92h6v1h-6zM4 102h2v1h-2zM7 102h5v1h-5zM13 102h3v1h-3zM17 102h8v1h-8zM26 102h6v1h-6zM4 124h2v1h-2zM7 124h10v1h-10zM18 124h3v1h-3zM22 124h3v1h-3zM32 134h2v1h-2zM35 134h3v1h-3zM39 134h1v1h-1zM41 134h6v1h-6zM48 134h7v1h-7zM56 134h5v1h-5zM32 136h2v1h-2zM35 136h2v1h-2zM38 136h8v1h-8zM47 136h6v1h-6zM54 136h2v1h-2zM57 136h4v1h-4zM62 136h7v1h-7zM4 140h2v1h-2zM7 140h9v1h-9zM17 140h3v1h-3zM21 140h8v1h-8zM30 140h6v1h-6zM37 140h4v1h-4zM42 140h3v1h-3zM46 140h6v1h-6zM53 140h2v1h-2zM56 140h6v1h-6zM63 140h3v1h-3zM67 140h3v1h-3zM71 140h7v1h-7zM79 140h8v1h-8zM4 146h2v1h-2zM7 146h6v1h-6zM14 146h1v1h-1zM16 146h6v1h-6zM23 146h4v1h-4zM28 146h3v1h-3zM32 146h5v1h-5zM38 146h4v1h-4zM43 146h2v1h-2zM46 146h4v1h-4zM51 146h7v1h-7zM59 146h4v1h-4zM4 148h2v1h-2zM7 148h4v1h-4zM12 148h4v1h-4zM17 148h5v1h-5zM23 148h3v1h-3zM27 148h6v1h-6zM4 150h2v1h-2zM7 150h23v1h-23zM31 150h7v1h-7zM39 150h1v1h-1zM41 150h6v1h-6zM48 150h4v1h-4zM53 150h2v1h-2zM56 150h5v1h-5zM62 150h2v1h-2zM65 150h3v1h-3zM69 150h4v1h-4zM74 150h6v1h-6zM81 150h4v1h-4zM86 150h5v1h-5zM92 150h6v1h-6zM99 150h4v1h-4zM104 150h3v1h-3zM108 150h2v1h-2zM111 150h1v1h-1zM4 152h2v1h-2zM7 152h2v1h-2zM10 152h3v1h-3zM14 152h6v1h-6zM21 152h2v1h-2zM24 152h5v1h-5zM30 152h8v1h-8zM39 152h8v1h-8zM48 152h3v1h-3zM52 152h10v1h-10zM63 152h3v1h-3zM67 152h3v1h-3zM71 152h4v1h-4zM76 152h2v1h-2zM79 152h3v1h-3zM83 152h5v1h-5zM89 152h3v1h-3zM93 152h6v1h-6zM100 152h2v1h-2zM103 152h5v1h-5zM109 152h2v1h-2zM4 154h2v1h-2zM7 154h5v1h-5zM13 154h3v1h-3zM17 154h4v1h-4zM22 154h2v1h-2zM25 154h3v1h-3zM29 154h8v1h-8zM38 154h5v1h-5zM44 154h2v1h-2zM47 154h5v1h-5zM53 154h2v1h-2zM56 154h7v1h-7zM64 154h3v1h-3zM68 154h4v1h-4zM73 154h2v1h-2zM76 154h3v1h-3zM80 154h11v1h-11zM92 154h7v1h-7zM100 154h4v1h-4zM105 154h2v1h-2zM108 154h4v1h-4zM4 156h2v1h-2zM7 156h2v1h-2zM10 156h3v1h-3zM14 156h6v1h-6zM21 156h3v1h-3zM25 156h4v1h-4zM30 156h2v1h-2zM33 156h3v1h-3zM37 156h4v1h-4zM42 156h6v1h-6zM49 156h2v1h-2zM52 156h4v1h-4zM57 156h4v1h-4zM62 156h9v1h-9zM72 156h8v1h-8zM81 156h8v1h-8zM90 156h4v1h-4zM95 156h2v1h-2zM98 156h6v1h-6zM105 156h3v1h-3zM109 156h3v1h-3zM4 158h2v1h-2zM7 158h2v1h-2zM10 158h3v1h-3zM14 158h4v1h-4zM19 158h6v1h-6zM26 158h4v1h-4zM31 158h5v1h-5zM37 158h6v1h-6zM44 158h6v1h-6zM51 158h2v1h-2zM54 158h9v1h-9zM64 158h4v1h-4zM69 158h6v1h-6zM76 158h2v1h-2zM79 158h3v1h-3zM83 158h7v1h-7zM91 158h6v1h-6zM98 158h2v1h-2zM101 158h4v1h-4zM106 158h5v1h-5zM4 172h2v1h-2zM7 172h10v1h-10zM18 172h3v1h-3zM22 172h8v1h-8zM31 172h4v1h-4zM36 172h4v1h-4zM41 172h3v1h-3zM45 172h7v1h-7zM4 178h2v1h-2zM7 178h4v1h-4zM12 178h2v1h-2zM15 178h7v1h-7zM23 178h3v1h-3zM27 178h7v1h-7zM35 178h7v1h-7zM8 182h2v1h-2zM11 182h6v1h-6zM18 182h1v1h-1zM20 182h6v1h-6zM27 182h2v1h-2zM30 182h8v1h-8zM39 182h8v1h-8zM48 182h4v1h-4zM53 182h4v1h-4zM58 182h12v1h-12zM71 182h2v1h-2zM74 182h10v1h-10zM85 182h6v1h-6zM8 188h2v1h-2zM11 188h7v1h-7zM19 188h1v1h-1zM21 188h5v1h-5zM27 188h2v1h-2zM30 188h5v1h-5zM36 188h7v1h-7zM44 188h4v1h-4zM49 188h1v1h-1zM51 188h7v1h-7zM59 188h5v1h-5zM65 188h2v1h-2zM68 188h2v1h-2zM71 188h8v1h-8zM80 188h6v1h-6zM8 190h2v1h-2zM11 190h7v1h-7zM19 190h3v1h-3zM23 190h6v1h-6zM30 190h2v1h-2zM33 190h7v1h-7zM41 190h8v1h-8zM8 192h2v1h-2zM11 192h11v1h-11zM23 192h3v1h-3zM27 192h4v1h-4zM32 192h10v1h-10zM43 192h2v1h-2zM46 192h3v1h-3zM50 192h8v1h-8zM59 192h7v1h-7zM67 192h3v1h-3zM71 192h5v1h-5zM77 192h2v1h-2zM80 192h3v1h-3zM84 192h7v1h-7zM92 192h5v1h-5zM98 192h4v1h-4zM103 192h5v1h-5zM109 192h2v1h-2zM8 194h2v1h-2zM11 194h3v1h-3zM15 194h5v1h-5zM21 194h2v1h-2zM24 194h8v1h-8zM33 194h2v1h-2zM36 194h8v1h-8zM45 194h10v1h-10zM56 194h4v1h-4zM61 194h4v1h-4zM66 194h2v1h-2zM69 194h5v1h-5zM75 194h6v1h-6zM82 194h2v1h-2zM85 194h5v1h-5zM91 194h7v1h-7zM99 194h9v1h-9zM109 194h3v1h-3zM8 196h2v1h-2zM11 196h2v1h-2zM14 196h7v1h-7zM22 196h2v1h-2zM25 196h8v1h-8zM34 196h6v1h-6zM41 196h6v1h-6zM48 196h3v1h-3zM52 196h8v1h-8zM61 196h4v1h-4zM66 196h3v1h-3zM70 196h5v1h-5zM8 202h2v1h-2zM11 202h2v1h-2zM14 202h8v1h-8zM23 202h2v1h-2zM26 202h7v1h-7zM34 202h4v1h-4zM39 202h11v1h-11zM51 202h2v1h-2zM54 202h5v1h-5zM60 202h8v1h-8zM69 202h4v1h-4zM74 202h3v1h-3zM78 202h4v1h-4zM83 202h6v1h-6zM90 202h3v1h-3zM94 202h7v1h-7zM102 202h4v1h-4zM107 202h5v1h-5zM8 204h2v1h-2zM11 204h3v1h-3zM15 204h7v1h-7zM23 204h4v1h-4zM28 204h8v1h-8zM37 204h8v1h-8zM46 204h10v1h-10zM57 204h11v1h-11zM69 204h5v1h-5zM75 204h7v1h-7zM83 204h2v1h-2zM86 204h3v1h-3zM90 204h6v1h-6zM97 204h6v1h-6zM104 204h4v1h-4zM109 204h3v1h-3zM78 208h2v1h-2zM81 208h9v1h-9zM91 208h4v1h-4zM96 208h10v1h-10zM8 216h2v1h-2zM11 216h4v1h-4zM16 216h7v1h-7zM24 216h4v1h-4zM29 216h8v1h-8zM38 216h6v1h-6zM45 216h3v1h-3zM49 216h7v1h-7zM57 216h2v1h-2zM12 220h2v1h-2zM15 220h7v1h-7zM23 220h3v1h-3zM27 220h8v1h-8zM36 220h6v1h-6zM12 222h2v1h-2zM15 222h22v1h-22zM38 222h5v1h-5zM44 222h4v1h-4zM49 222h5v1h-5zM55 222h8v1h-8zM64 222h3v1h-3zM68 222h4v1h-4zM73 222h7v1h-7zM81 222h4v1h-4zM86 222h3v1h-3zM90 222h4v1h-4zM95 222h4v1h-4zM100 222h5v1h-5zM106 222h2v1h-2zM109 222h3v1h-3zM26 230h2v1h-2zM29 230h4v1h-4zM34 230h8v1h-8zM43 230h7v1h-7zM12 236h2v1h-2zM15 236h5v1h-5zM21 236h3v1h-3zM25 236h4v1h-4zM30 236h6v1h-6zM37 236h3v1h-3zM41 236h5v1h-5zM47 236h2v1h-2zM50 236h2v1h-2zM53 236h8v1h-8zM62 236h3v1h-3zM12 238h2v1h-2zM15 238h23v1h-23zM39 238h8v1h-8zM48 238h1v1h-1zM50 238h7v1h-7zM58 238h2v1h-2zM61 238h1v1h-1zM63 238h8v1h-8zM72 238h6v1h-6zM79 238h4v1h-4zM84 238h6v1h-6zM91 238h8v1h-8zM100 238h6v1h-6zM107 238h5v1h-5zM16 246h2v1h-2zM19 246h6v1h-6zM26 246h3v1h-3zM16 248h2v1h-2zM19 248h8v1h-8zM28 248h3v1h-3zM32 248h3v1h-3zM36 248h6v1h-6zM16 250h2v1h-2zM19 250h5v1h-5zM25 250h2v1h-2zM28 250h1v1h-1zM30 250h7v1h-7zM38 250h2v1h-2zM41 250h2v1h-2zM44 250h12v1h-12zM57 250h10v1h-10zM68 250h12v1h-12zM81 250h3v1h-3zM85 250h5v1h-5zM91 250h2v1h-2zM94 250h3v1h-3zM98 250h4v1h-4zM103 250h6v1h-6zM16 252h2v1h-2zM19 252h6v1h-6zM26 252h1v1h-1zM28 252h2v1h-2zM31 252h4v1h-4zM36 252h7v1h-7zM44 252h5v1h-5zM50 252h2v1h-2zM53 252h7v1h-7zM61 252h2v1h-2zM64 252h3v1h-3zM68 252h4v1h-4zM73 252h2v1h-2zM76 252h12v1h-12zM16 254h2v1h-2zM19 254h5v1h-5zM25 254h12v1h-12zM38 254h2v1h-2zM41 254h1v1h-1zM43 254h7v1h-7zM51 254h6v1h-6zM58 254h1v1h-1zM60 254h5v1h-5zM66 254h3v1h-3zM70 254h7v1h-7zM78 254h2v1h-2zM81 254h3v1h-3zM85 254h4v1h-4zM90 254h9v1h-9zM100 254h2v1h-2zM103 254h7v1h-7zM111 254h1v1h-1zM16 256h2v1h-2zM19 256h7v1h-7zM27 256h11v1h-11zM39 256h2v1h-2zM42 256h5v1h-5zM48 256h3v1h-3zM52 256h3v1h-3zM56 256h7v1h-7zM64 256h2v1h-2zM67 256h2v1h-2zM70 256h7v1h-7zM78 256h4v1h-4zM16 258h2v1h-2zM19 258h3v1h-3zM23 258h6v1h-6zM30 258h9v1h-9zM40 258h6v1h-6zM47 258h2v1h-2zM50 258h3v1h-3zM54 258h3v1h-3zM58 258h6v1h-6zM65 258h2v1h-2zM68 258h3v1h-3zM72 258h6v1h-6zM16 264h2v1h-2zM19 264h7v1h-7zM27 264h3v1h-3zM31 264h3v1h-3zM35 264h7v1h-7zM16 266h2v1h-2zM19 266h3v1h-3zM23 266h7v1h-7zM31 266h6v1h-6zM38 266h5v1h-5zM44 266h5v1h-5zM50 266h3v1h-3zM54 266h3v1h-3zM58 266h7v1h-7zM66 266h6v1h-6zM73 266h1v1h-1zM75 266h1v1h-1zM77 266h5v1h-5zM83 266h4v1h-4zM88 266h3v1h-3zM92 266h3v1h-3zM96 266h6v1h-6zM16 268h2v1h-2zM19 268h3v1h-3zM23 268h6v1h-6zM30 268h2v1h-2zM33 268h3v1h-3zM37 268h7v1h-7zM45 268h2v1h-2zM48 268h3v1h-3zM52 268h5v1h-5zM58 268h3v1h-3zM62 268h6v1h-6zM69 268h5v1h-5zM75 268h3v1h-3zM79 268h4v1h-4zM84 268h2v1h-2zM87 268h3v1h-3zM91 268h3v1h-3zM95 268h6v1h-6zM16 284h2v1h-2zM19 284h4v1h-4zM24 284h7v1h-7z"/><path fill="#34412e" transform="translate(0,1)" d="M0 14h2v1h-2zM3 14h3v1h-3zM7 14h6v1h-6zM14 14h2v1h-2zM17 14h5v1h-5zM23 14h2v1h-2zM26 14h8v1h-8zM35 14h2v1h-2zM38 14h3v1h-3zM42 14h4v1h-4zM0 16h2v1h-2zM3 16h1v1h-1zM5 16h5v1h-5zM11 16h2v1h-2zM14 16h3v1h-3zM18 16h5v1h-5zM24 16h3v1h-3zM28 16h2v1h-2zM31 16h3v1h-3zM35 16h4v1h-4zM40 16h9v1h-9zM50 16h4v1h-4zM55 16h3v1h-3zM59 16h3v1h-3zM63 16h6v1h-6zM70 16h4v1h-4zM75 16h4v1h-4zM80 16h2v1h-2zM83 16h4v1h-4zM0 18h2v1h-2zM3 18h12v1h-12zM16 18h4v1h-4zM21 18h1v1h-1zM23 18h4v1h-4zM28 18h10v1h-10zM39 18h2v1h-2zM42 18h6v1h-6zM49 18h4v1h-4zM54 18h8v1h-8zM63 18h3v1h-3zM67 18h4v1h-4zM72 18h5v1h-5zM78 18h4v1h-4zM83 18h2v1h-2zM0 20h2v1h-2zM3 20h1v1h-1zM5 20h5v1h-5zM11 20h2v1h-2zM14 20h4v1h-4zM0 22h2v1h-2zM3 22h4v1h-4zM8 22h2v1h-2zM11 22h1v1h-1zM13 22h10v1h-10zM24 22h6v1h-6zM31 22h2v1h-2zM34 22h5v1h-5zM40 22h4v1h-4zM45 22h6v1h-6zM52 22h2v1h-2zM55 22h6v1h-6zM62 22h3v1h-3zM66 22h1v1h-1zM68 22h6v1h-6zM75 22h7v1h-7zM83 22h3v1h-3zM0 24h2v1h-2zM3 24h4v1h-4zM8 24h4v1h-4zM13 24h4v1h-4zM18 24h7v1h-7zM26 24h9v1h-9zM36 24h5v1h-5zM42 24h3v1h-3zM46 24h9v1h-9zM56 24h3v1h-3zM60 24h4v1h-4zM65 24h6v1h-6zM0 30h2v1h-2zM3 30h3v1h-3zM7 30h7v1h-7zM15 30h6v1h-6zM22 30h2v1h-2zM25 30h7v1h-7zM33 30h2v1h-2zM36 30h8v1h-8zM45 30h4v1h-4zM50 30h3v1h-3zM54 30h3v1h-3zM58 30h2v1h-2zM61 30h4v1h-4zM66 30h4v1h-4zM71 30h16v1h-16zM0 32h2v1h-2zM3 32h1v1h-1zM5 32h6v1h-6zM12 32h5v1h-5zM18 32h4v1h-4zM23 32h9v1h-9zM33 32h10v1h-10zM44 32h3v1h-3zM48 32h4v1h-4zM53 32h9v1h-9zM63 32h3v1h-3zM67 32h7v1h-7zM75 32h2v1h-2zM78 32h7v1h-7zM0 34h2v1h-2zM3 34h1v1h-1zM5 34h7v1h-7zM13 34h5v1h-5zM19 34h4v1h-4zM24 34h7v1h-7zM32 34h7v1h-7zM40 34h3v1h-3zM44 34h9v1h-9zM54 34h3v1h-3zM58 34h6v1h-6zM65 34h2v1h-2zM68 34h5v1h-5zM74 34h4v1h-4zM79 34h2v1h-2zM82 34h3v1h-3zM86 34h6v1h-6zM0 36h2v1h-2zM3 36h2v1h-2zM6 36h2v1h-2zM9 36h1v1h-1zM11 36h6v1h-6zM18 36h7v1h-7zM26 36h4v1h-4zM31 36h8v1h-8zM40 36h10v1h-10zM51 36h3v1h-3zM55 36h7v1h-7zM63 36h3v1h-3zM67 36h4v1h-4zM72 36h7v1h-7zM80 36h13v1h-13zM0 42h2v1h-2zM3 42h3v1h-3zM7 42h4v1h-4zM12 42h2v1h-2zM15 42h3v1h-3zM19 42h5v1h-5zM25 42h6v1h-6zM32 42h3v1h-3zM36 42h8v1h-8zM45 42h5v1h-5zM0 48h2v1h-2zM3 48h3v1h-3zM7 48h8v1h-8zM16 48h4v1h-4zM21 48h2v1h-2zM24 48h2v1h-2zM27 48h3v1h-3zM0 54h2v1h-2zM3 54h7v1h-7zM11 54h13v1h-13zM25 54h3v1h-3zM29 54h3v1h-3zM33 54h8v1h-8zM42 54h4v1h-4zM54 58h2v1h-2zM57 58h3v1h-3zM61 58h5v1h-5zM67 58h4v1h-4zM4 66h2v1h-2zM7 66h3v1h-3zM11 66h3v1h-3zM15 66h6v1h-6zM22 66h2v1h-2zM25 66h9v1h-9zM35 66h5v1h-5zM4 80h2v1h-2zM7 80h3v1h-3zM11 80h2v1h-2zM14 80h3v1h-3zM18 80h7v1h-7zM26 80h5v1h-5zM32 80h3v1h-3zM36 80h3v1h-3zM40 80h8v1h-8zM49 80h6v1h-6zM56 80h5v1h-5zM62 80h3v1h-3zM66 80h5v1h-5zM72 80h2v1h-2zM75 80h2v1h-2zM4 82h2v1h-2zM7 82h9v1h-9zM17 82h3v1h-3zM21 82h4v1h-4zM26 82h2v1h-2zM29 82h1v1h-1zM31 82h7v1h-7zM39 82h5v1h-5zM45 82h3v1h-3zM49 82h3v1h-3zM53 82h8v1h-8zM62 82h6v1h-6zM4 84h2v1h-2zM7 84h3v1h-3zM11 84h10v1h-10zM22 84h4v1h-4zM27 84h3v1h-3zM31 84h4v1h-4zM36 84h3v1h-3zM40 84h3v1h-3zM44 84h5v1h-5zM50 84h3v1h-3zM54 84h3v1h-3zM58 84h6v1h-6zM65 84h2v1h-2zM68 84h11v1h-11zM80 84h3v1h-3zM84 84h3v1h-3zM88 84h4v1h-4zM93 84h2v1h-2zM96 84h3v1h-3zM100 84h6v1h-6zM107 84h3v1h-3zM111 84h1v1h-1zM4 86h2v1h-2zM7 86h2v1h-2zM10 86h3v1h-3zM14 86h6v1h-6zM21 86h11v1h-11zM33 86h3v1h-3zM37 86h2v1h-2zM40 86h13v1h-13zM54 86h5v1h-5zM60 86h5v1h-5zM66 86h9v1h-9zM76 86h3v1h-3zM80 86h3v1h-3zM84 86h7v1h-7zM92 86h4v1h-4zM97 86h5v1h-5zM103 86h2v1h-2zM106 86h6v1h-6zM4 88h2v1h-2zM7 88h3v1h-3zM11 88h5v1h-5zM17 88h4v1h-4zM22 88h3v1h-3zM26 88h8v1h-8zM35 88h7v1h-7zM43 88h3v1h-3zM47 88h3v1h-3zM51 88h9v1h-9zM61 88h4v1h-4zM66 88h9v1h-9zM76 88h4v1h-4zM81 88h7v1h-7zM89 88h3v1h-3zM93 88h8v1h-8zM102 88h3v1h-3zM106 88h6v1h-6zM4 90h2v1h-2zM7 90h6v1h-6zM14 90h3v1h-3zM18 90h6v1h-6zM25 90h2v1h-2zM28 90h11v1h-11zM40 90h10v1h-10zM51 90h3v1h-3zM55 90h4v1h-4zM60 90h7v1h-7zM68 90h3v1h-3zM72 90h5v1h-5zM78 90h3v1h-3zM82 90h4v1h-4zM87 90h6v1h-6zM94 90h7v1h-7zM102 90h3v1h-3zM106 90h6v1h-6zM4 92h2v1h-2zM7 92h2v1h-2zM10 92h6v1h-6zM17 92h4v1h-4zM22 92h7v1h-7zM30 92h6v1h-6zM4 102h2v1h-2zM7 102h5v1h-5zM13 102h3v1h-3zM17 102h8v1h-8zM26 102h6v1h-6zM4 124h2v1h-2zM7 124h10v1h-10zM18 124h3v1h-3zM22 124h3v1h-3zM32 134h2v1h-2zM35 134h3v1h-3zM39 134h1v1h-1zM41 134h6v1h-6zM48 134h7v1h-7zM56 134h5v1h-5zM32 136h2v1h-2zM35 136h2v1h-2zM38 136h8v1h-8zM47 136h6v1h-6zM54 136h2v1h-2zM57 136h4v1h-4zM62 136h7v1h-7zM4 140h2v1h-2zM7 140h9v1h-9zM17 140h3v1h-3zM21 140h8v1h-8zM30 140h6v1h-6zM37 140h4v1h-4zM42 140h3v1h-3zM46 140h6v1h-6zM53 140h2v1h-2zM56 140h6v1h-6zM63 140h3v1h-3zM67 140h3v1h-3zM71 140h7v1h-7zM79 140h8v1h-8zM4 146h2v1h-2zM7 146h6v1h-6zM14 146h1v1h-1zM16 146h6v1h-6zM23 146h4v1h-4zM28 146h3v1h-3zM32 146h5v1h-5zM38 146h4v1h-4zM43 146h2v1h-2zM46 146h4v1h-4zM51 146h7v1h-7zM59 146h4v1h-4zM4 148h2v1h-2zM7 148h4v1h-4zM12 148h4v1h-4zM17 148h5v1h-5zM23 148h3v1h-3zM27 148h6v1h-6zM4 150h2v1h-2zM7 150h23v1h-23zM31 150h7v1h-7zM39 150h1v1h-1zM41 150h6v1h-6zM48 150h4v1h-4zM53 150h2v1h-2zM56 150h5v1h-5zM62 150h2v1h-2zM65 150h3v1h-3zM69 150h4v1h-4zM74 150h6v1h-6zM81 150h4v1h-4zM86 150h5v1h-5zM92 150h6v1h-6zM99 150h4v1h-4zM104 150h3v1h-3zM108 150h2v1h-2zM111 150h1v1h-1zM4 152h2v1h-2zM7 152h2v1h-2zM10 152h3v1h-3zM14 152h6v1h-6zM21 152h2v1h-2zM24 152h5v1h-5zM30 152h8v1h-8zM39 152h8v1h-8zM48 152h3v1h-3zM52 152h10v1h-10zM63 152h3v1h-3zM67 152h3v1h-3zM71 152h4v1h-4zM76 152h2v1h-2zM79 152h3v1h-3zM83 152h5v1h-5zM89 152h3v1h-3zM93 152h6v1h-6zM100 152h2v1h-2zM103 152h5v1h-5zM109 152h2v1h-2zM4 154h2v1h-2zM7 154h5v1h-5zM13 154h3v1h-3zM17 154h4v1h-4zM22 154h2v1h-2zM25 154h3v1h-3zM29 154h8v1h-8zM38 154h5v1h-5zM44 154h2v1h-2zM47 154h5v1h-5zM53 154h2v1h-2zM56 154h7v1h-7zM64 154h3v1h-3zM68 154h4v1h-4zM73 154h2v1h-2zM76 154h3v1h-3zM80 154h11v1h-11zM92 154h7v1h-7zM100 154h4v1h-4zM105 154h2v1h-2zM108 154h4v1h-4zM4 156h2v1h-2zM7 156h2v1h-2zM10 156h3v1h-3zM14 156h6v1h-6zM21 156h3v1h-3zM25 156h4v1h-4zM30 156h2v1h-2zM33 156h3v1h-3zM37 156h4v1h-4zM42 156h6v1h-6zM49 156h2v1h-2zM52 156h4v1h-4zM57 156h4v1h-4zM62 156h9v1h-9zM72 156h8v1h-8zM81 156h8v1h-8zM90 156h4v1h-4zM95 156h2v1h-2zM98 156h6v1h-6zM105 156h3v1h-3zM109 156h3v1h-3zM4 158h2v1h-2zM7 158h2v1h-2zM10 158h3v1h-3zM14 158h4v1h-4zM19 158h6v1h-6zM26 158h4v1h-4zM31 158h5v1h-5zM37 158h6v1h-6zM44 158h6v1h-6zM51 158h2v1h-2zM54 158h9v1h-9zM64 158h4v1h-4zM69 158h6v1h-6zM76 158h2v1h-2zM79 158h3v1h-3zM83 158h7v1h-7zM91 158h6v1h-6zM98 158h2v1h-2zM101 158h4v1h-4zM106 158h5v1h-5zM4 172h2v1h-2zM7 172h10v1h-10zM18 172h3v1h-3zM22 172h8v1h-8zM31 172h4v1h-4zM36 172h4v1h-4zM41 172h3v1h-3zM45 172h7v1h-7zM4 178h2v1h-2zM7 178h4v1h-4zM12 178h2v1h-2zM15 178h7v1h-7zM23 178h3v1h-3zM27 178h7v1h-7zM35 178h7v1h-7zM8 182h2v1h-2zM11 182h6v1h-6zM18 182h1v1h-1zM20 182h6v1h-6zM27 182h2v1h-2zM30 182h8v1h-8zM39 182h8v1h-8zM48 182h4v1h-4zM53 182h4v1h-4zM58 182h12v1h-12zM71 182h2v1h-2zM74 182h10v1h-10zM85 182h6v1h-6zM8 188h2v1h-2zM11 188h7v1h-7zM19 188h1v1h-1zM21 188h5v1h-5zM27 188h2v1h-2zM30 188h5v1h-5zM36 188h7v1h-7zM44 188h4v1h-4zM49 188h1v1h-1zM51 188h7v1h-7zM59 188h5v1h-5zM65 188h2v1h-2zM68 188h2v1h-2zM71 188h8v1h-8zM80 188h6v1h-6zM8 190h2v1h-2zM11 190h7v1h-7zM19 190h3v1h-3zM23 190h6v1h-6zM30 190h2v1h-2zM33 190h7v1h-7zM41 190h8v1h-8zM8 192h2v1h-2zM11 192h11v1h-11zM23 192h3v1h-3zM27 192h4v1h-4zM32 192h10v1h-10zM43 192h2v1h-2zM46 192h3v1h-3zM50 192h8v1h-8zM59 192h7v1h-7zM67 192h3v1h-3zM71 192h5v1h-5zM77 192h2v1h-2zM80 192h3v1h-3zM84 192h7v1h-7zM92 192h5v1h-5zM98 192h4v1h-4zM103 192h5v1h-5zM109 192h2v1h-2zM8 194h2v1h-2zM11 194h3v1h-3zM15 194h5v1h-5zM21 194h2v1h-2zM24 194h8v1h-8zM33 194h2v1h-2zM36 194h8v1h-8zM45 194h10v1h-10zM56 194h4v1h-4zM61 194h4v1h-4zM66 194h2v1h-2zM69 194h5v1h-5zM75 194h6v1h-6zM82 194h2v1h-2zM85 194h5v1h-5zM91 194h7v1h-7zM99 194h9v1h-9zM109 194h3v1h-3zM8 196h2v1h-2zM11 196h2v1h-2zM14 196h7v1h-7zM22 196h2v1h-2zM25 196h8v1h-8zM34 196h6v1h-6zM41 196h6v1h-6zM48 196h3v1h-3zM52 196h8v1h-8zM61 196h4v1h-4zM66 196h3v1h-3zM70 196h5v1h-5zM8 202h2v1h-2zM11 202h2v1h-2zM14 202h8v1h-8zM23 202h2v1h-2zM26 202h7v1h-7zM34 202h4v1h-4zM39 202h11v1h-11zM51 202h2v1h-2zM54 202h5v1h-5zM60 202h8v1h-8zM69 202h4v1h-4zM74 202h3v1h-3zM78 202h4v1h-4zM83 202h6v1h-6zM90 202h3v1h-3zM94 202h7v1h-7zM102 202h4v1h-4zM107 202h5v1h-5zM8 204h2v1h-2zM11 204h3v1h-3zM15 204h7v1h-7zM23 204h4v1h-4zM28 204h8v1h-8zM37 204h8v1h-8zM46 204h10v1h-10zM57 204h11v1h-11zM69 204h5v1h-5zM75 204h7v1h-7zM83 204h2v1h-2zM86 204h3v1h-3zM90 204h6v1h-6zM97 204h6v1h-6zM104 204h4v1h-4zM109 204h3v1h-3zM78 208h2v1h-2zM81 208h9v1h-9zM91 208h4v1h-4zM96 208h10v1h-10zM8 216h2v1h-2zM11 216h4v1h-4zM16 216h7v1h-7zM24 216h4v1h-4zM29 216h8v1h-8zM38 216h6v1h-6zM45 216h3v1h-3zM49 216h7v1h-7zM57 216h2v1h-2zM12 220h2v1h-2zM15 220h7v1h-7zM23 220h3v1h-3zM27 220h8v1h-8zM36 220h6v1h-6zM12 222h2v1h-2zM15 222h22v1h-22zM38 222h5v1h-5zM44 222h4v1h-4zM49 222h5v1h-5zM55 222h8v1h-8zM64 222h3v1h-3zM68 222h4v1h-4zM73 222h7v1h-7zM81 222h4v1h-4zM86 222h3v1h-3zM90 222h4v1h-4zM95 222h4v1h-4zM100 222h5v1h-5zM106 222h2v1h-2zM109 222h3v1h-3zM26 230h2v1h-2zM29 230h4v1h-4zM34 230h8v1h-8zM43 230h7v1h-7zM12 236h2v1h-2zM15 236h5v1h-5zM21 236h3v1h-3zM25 236h4v1h-4zM30 236h6v1h-6zM37 236h3v1h-3zM41 236h5v1h-5zM47 236h2v1h-2zM50 236h2v1h-2zM53 236h8v1h-8zM62 236h3v1h-3zM12 238h2v1h-2zM15 238h23v1h-23zM39 238h8v1h-8zM48 238h1v1h-1zM50 238h7v1h-7zM58 238h2v1h-2zM61 238h1v1h-1zM63 238h8v1h-8zM72 238h6v1h-6zM79 238h4v1h-4zM84 238h6v1h-6zM91 238h8v1h-8zM100 238h6v1h-6zM107 238h5v1h-5zM16 246h2v1h-2zM19 246h6v1h-6zM26 246h3v1h-3zM16 248h2v1h-2zM19 248h8v1h-8zM28 248h3v1h-3zM32 248h3v1h-3zM36 248h6v1h-6zM16 250h2v1h-2zM19 250h5v1h-5zM25 250h2v1h-2zM28 250h1v1h-1zM30 250h7v1h-7zM38 250h2v1h-2zM41 250h2v1h-2zM44 250h12v1h-12zM57 250h10v1h-10zM68 250h12v1h-12zM81 250h3v1h-3zM85 250h5v1h-5zM91 250h2v1h-2zM94 250h3v1h-3zM98 250h4v1h-4zM103 250h6v1h-6zM16 252h2v1h-2zM19 252h6v1h-6zM26 252h1v1h-1zM28 252h2v1h-2zM31 252h4v1h-4zM36 252h7v1h-7zM44 252h5v1h-5zM50 252h2v1h-2zM53 252h7v1h-7zM61 252h2v1h-2zM64 252h3v1h-3zM68 252h4v1h-4zM73 252h2v1h-2zM76 252h12v1h-12zM16 254h2v1h-2zM19 254h5v1h-5zM25 254h12v1h-12zM38 254h2v1h-2zM41 254h1v1h-1zM43 254h7v1h-7zM51 254h6v1h-6zM58 254h1v1h-1zM60 254h5v1h-5zM66 254h3v1h-3zM70 254h7v1h-7zM78 254h2v1h-2zM81 254h3v1h-3zM85 254h4v1h-4zM90 254h9v1h-9zM100 254h2v1h-2zM103 254h7v1h-7zM111 254h1v1h-1zM16 256h2v1h-2zM19 256h7v1h-7zM27 256h11v1h-11zM39 256h2v1h-2zM42 256h5v1h-5zM48 256h3v1h-3zM52 256h3v1h-3zM56 256h7v1h-7zM64 256h2v1h-2zM67 256h2v1h-2zM70 256h7v1h-7zM78 256h4v1h-4zM16 258h2v1h-2zM19 258h3v1h-3zM23 258h6v1h-6zM30 258h9v1h-9zM40 258h6v1h-6zM47 258h2v1h-2zM50 258h3v1h-3zM54 258h3v1h-3zM58 258h6v1h-6zM65 258h2v1h-2zM68 258h3v1h-3zM72 258h6v1h-6zM16 264h2v1h-2zM19 264h7v1h-7zM27 264h3v1h-3zM31 264h3v1h-3zM35 264h7v1h-7zM16 266h2v1h-2zM19 266h3v1h-3zM23 266h7v1h-7zM31 266h6v1h-6zM38 266h5v1h-5zM44 266h5v1h-5zM50 266h3v1h-3zM54 266h3v1h-3zM58 266h7v1h-7zM66 266h6v1h-6zM73 266h1v1h-1zM75 266h1v1h-1zM77 266h5v1h-5zM83 266h4v1h-4zM88 266h3v1h-3zM92 266h3v1h-3zM96 266h6v1h-6zM16 268h2v1h-2zM19 268h3v1h-3zM23 268h6v1h-6zM30 268h2v1h-2zM33 268h3v1h-3zM37 268h7v1h-7zM45 268h2v1h-2zM48 268h3v1h-3zM52 268h5v1h-5zM58 268h3v1h-3zM62 268h6v1h-6zM69 268h5v1h-5zM75 268h3v1h-3zM79 268h4v1h-4zM84 268h2v1h-2zM87 268h3v1h-3zM91 268h3v1h-3zM95 268h6v1h-6zM16 284h2v1h-2zM19 284h4v1h-4zM24 284h7v1h-7z"/><path fill="#416c90" d="M8 26h9v1h-9zM8 38h10v1h-10zM8 44h11v1h-11zM0 50h3v1h-3zM0 56h6v1h-6zM7 56h5v1h-5zM13 56h6v1h-6zM34 58h17v1h-17zM0 64h6v1h-6zM7 64h3v1h-3zM21 64h6v1h-6zM17 74h12v1h-12zM47 94h9v1h-9zM94 94h4v1h-4zM17 96h12v1h-12zM17 106h12v1h-12zM0 122h3v1h-3zM9 122h3v1h-3zM19 122h4v1h-4zM17 128h12v1h-12zM4 134h5v1h-5zM10 134h3v1h-3zM4 136h5v1h-5zM10 136h3v1h-3zM4 160h6v1h-6zM73 160h9v1h-9zM90 160h22v1h-22zM21 164h4v1h-4zM17 166h12v1h-12zM8 184h6v1h-6zM31 184h11v1h-11zM68 198h10v1h-10zM23 206h11v1h-11zM21 208h12v1h-12zM12 224h6v1h-6zM43 224h16v1h-16zM70 224h6v1h-6zM45 228h19v1h-19zM12 240h6v1h-6zM41 240h23v1h-23zM75 240h6v1h-6zM98 240h6v1h-6zM105 240h6v1h-6zM40 244h11v1h-11zM16 260h6v1h-6zM46 260h6v1h-6zM29 272h6v1h-6zM36 272h6v1h-6z"/><path fill="#2e4252" transform="translate(0,1)" d="M8 26h9v1h-9zM8 38h10v1h-10zM8 44h11v1h-11zM0 50h3v1h-3zM0 56h6v1h-6zM7 56h5v1h-5zM13 56h6v1h-6zM34 58h17v1h-17zM0 64h6v1h-6zM7 64h3v1h-3zM21 64h6v1h-6zM17 74h12v1h-12zM47 94h9v1h-9zM94 94h4v1h-4zM17 96h12v1h-12zM17 106h12v1h-12zM0 122h3v1h-3zM9 122h3v1h-3zM19 122h4v1h-4zM17 128h12v1h-12zM4 134h5v1h-5zM10 134h3v1h-3zM4 136h5v1h-5zM10 136h3v1h-3zM4 160h6v1h-6zM73 160h9v1h-9zM90 160h22v1h-22zM21 164h4v1h-4zM17 166h12v1h-12zM8 184h6v1h-6zM31 184h11v1h-11zM68 198h10v1h-10zM23 206h11v1h-11zM21 208h12v1h-12zM12 224h6v1h-6zM43 224h16v1h-16zM70 224h6v1h-6zM45 228h19v1h-19zM12 240h6v1h-6zM41 240h23v1h-23zM75 240h6v1h-6zM98 240h6v1h-6zM105 240h6v1h-6zM40 244h11v1h-11zM16 260h6v1h-6zM46 260h6v1h-6zM29 272h6v1h-6zM36 272h6v1h-6z"/><path fill="#7c8c74" d="M18 26h4v1h-4zM19 38h2v1h-2zM20 44h3v1h-3zM18 50h1v1h-1zM24 72h1v1h-1zM44 94h1v1h-1zM41 104h1v1h-1zM11 116h1v1h-1zM35 126h1v1h-1zM29 134h1v1h-1zM29 136h1v1h-1zM84 160h1v1h-1zM87 160h1v1h-1zM10 180h1v1h-1zM58 198h1v1h-1zM17 218h1v1h-1zM76 260h1v1h-1z"/><path fill="#495045" transform="translate(0,1)" d="M18 26h4v1h-4zM19 38h2v1h-2zM20 44h3v1h-3zM18 50h1v1h-1zM24 72h1v1h-1zM44 94h1v1h-1zM41 104h1v1h-1zM11 116h1v1h-1zM35 126h1v1h-1zM29 134h1v1h-1zM29 136h1v1h-1zM84 160h1v1h-1zM87 160h1v1h-1zM10 180h1v1h-1zM58 198h1v1h-1zM17 218h1v1h-1zM76 260h1v1h-1z"/><path fill="#6c94a9" d="M4 50h11v1h-11zM33 56h17v1h-17zM5 58h6v1h-6zM17 58h14v1h-14zM41 64h9v1h-9zM13 68h12v1h-12zM8 72h12v1h-12zM31 94h11v1h-11zM80 94h11v1h-11zM100 94h9v1h-9zM26 104h11v1h-11zM13 122h4v1h-4zM26 122h4v1h-4zM21 126h4v1h-4zM27 126h4v1h-4zM14 134h12v1h-12zM14 136h12v1h-12zM26 142h11v1h-11zM39 142h12v1h-12zM53 142h12v1h-12zM68 142h17v1h-17zM24 160h9v1h-9zM8 164h9v1h-9zM14 174h9v1h-9zM25 184h5v1h-5zM17 198h8v1h-8zM45 198h11v1h-11zM61 198h5v1h-5zM12 206h8v1h-8zM17 214h1v1h-1zM13 218h1v1h-1zM20 218h1v1h-1zM24 218h8v1h-8zM34 218h1v1h-1zM34 224h6v1h-6zM60 224h5v1h-5zM66 224h1v1h-1zM22 228h6v1h-6zM30 228h10v1h-10zM33 240h5v1h-5zM65 240h5v1h-5zM71 240h1v1h-1zM16 244h5v1h-5zM23 244h13v1h-13zM36 260h6v1h-6zM68 260h5v1h-5zM25 270h6v1h-6zM40 270h6v1h-6zM48 270h9v1h-9zM20 272h6v1h-6zM74 274h11v1h-11zM87 274h11v1h-11zM100 274h7v1h-7z"/><path fill="#42545d" transform="translate(0,1)" d="M4 50h11v1h-11zM33 56h17v1h-17zM5 58h6v1h-6zM17 58h14v1h-14zM41 64h9v1h-9zM13 68h12v1h-12zM8 72h12v1h-12zM31 94h11v1h-11zM80 94h11v1h-11zM100 94h9v1h-9zM26 104h11v1h-11zM13 122h4v1h-4zM26 122h4v1h-4zM21 126h4v1h-4zM27 126h4v1h-4zM14 134h12v1h-12zM14 136h12v1h-12zM26 142h11v1h-11zM39 142h12v1h-12zM53 142h12v1h-12zM68 142h17v1h-17zM24 160h9v1h-9zM8 164h9v1h-9zM14 174h9v1h-9zM25 184h5v1h-5zM17 198h8v1h-8zM45 198h11v1h-11zM61 198h5v1h-5zM12 206h8v1h-8zM17 214h1v1h-1zM13 218h1v1h-1zM20 218h1v1h-1zM24 218h8v1h-8zM34 218h1v1h-1zM34 224h6v1h-6zM60 224h5v1h-5zM66 224h1v1h-1zM22 228h6v1h-6zM30 228h10v1h-10zM33 240h5v1h-5zM65 240h5v1h-5zM71 240h1v1h-1zM16 244h5v1h-5zM23 244h13v1h-13zM36 260h6v1h-6zM68 260h5v1h-5zM25 270h6v1h-6zM40 270h6v1h-6zM48 270h9v1h-9zM20 272h6v1h-6zM74 274h11v1h-11zM87 274h11v1h-11zM100 274h7v1h-7z"/><path fill="#8f8f8f" d="M16 50h1v1h-1zM19 50h1v1h-1zM51 56h1v1h-1zM53 56h1v1h-1zM4 58h1v1h-1zM12 58h1v1h-1zM14 58h1v1h-1zM16 58h1v1h-1zM32 58h1v1h-1zM52 58h1v1h-1zM0 60h1v1h-1zM1 60h1v1h-1zM20 64h1v1h-1zM40 64h1v1h-1zM50 64h1v1h-1zM52 64h1v1h-1zM26 68h1v1h-1zM51 68h1v1h-1zM52 68h1v1h-1zM53 68h1v1h-1zM7 72h1v1h-1zM21 72h1v1h-1zM22 72h1v1h-1zM25 72h1v1h-1zM27 72h1v1h-1zM16 74h1v1h-1zM29 74h1v1h-1zM69 74h1v1h-1zM70 74h1v1h-1zM4 76h1v1h-1zM7 94h1v1h-1zM30 94h1v1h-1zM42 94h1v1h-1zM45 94h1v1h-1zM56 94h1v1h-1zM79 94h1v1h-1zM91 94h1v1h-1zM92 94h1v1h-1zM98 94h1v1h-1zM109 94h1v1h-1zM111 94h1v1h-1zM16 96h1v1h-1zM29 96h1v1h-1zM59 96h1v1h-1zM60 96h1v1h-1zM4 98h1v1h-1zM7 104h1v1h-1zM25 104h1v1h-1zM37 104h1v1h-1zM39 104h1v1h-1zM42 104h1v1h-1zM44 104h1v1h-1zM16 106h1v1h-1zM29 106h1v1h-1zM66 106h1v1h-1zM67 106h1v1h-1zM4 108h1v1h-1zM10 112h1v1h-1zM38 112h1v1h-1zM39 112h1v1h-1zM12 116h1v1h-1zM0 118h1v1h-1zM8 122h1v1h-1zM17 122h1v1h-1zM24 122h1v1h-1zM25 122h1v1h-1zM30 122h1v1h-1zM32 122h1v1h-1zM7 126h1v1h-1zM20 126h1v1h-1zM25 126h1v1h-1zM31 126h1v1h-1zM33 126h1v1h-1zM36 126h1v1h-1zM38 126h1v1h-1zM16 128h1v1h-1zM29 128h1v1h-1zM50 128h1v1h-1zM51 128h1v1h-1zM4 130h1v1h-1zM27 134h1v1h-1zM30 134h1v1h-1zM27 136h1v1h-1zM30 136h1v1h-1zM25 142h1v1h-1zM37 142h1v1h-1zM51 142h1v1h-1zM65 142h1v1h-1zM67 142h1v1h-1zM85 142h1v1h-1zM86 142h1v1h-1zM23 160h1v1h-1zM34 160h1v1h-1zM59 160h1v1h-1zM71 160h1v1h-1zM82 160h1v1h-1zM85 160h1v1h-1zM88 160h1v1h-1zM7 164h1v1h-1zM18 164h1v1h-1zM19 164h1v1h-1zM25 164h1v1h-1zM27 164h1v1h-1zM16 166h1v1h-1zM29 166h1v1h-1zM61 166h1v1h-1zM62 166h1v1h-1zM4 168h1v1h-1zM13 174h1v1h-1zM23 174h1v1h-1zM24 174h1v1h-1zM9 180h1v1h-1zM11 180h1v1h-1zM13 180h1v1h-1zM24 184h1v1h-1zM30 184h1v1h-1zM42 184h1v1h-1zM43 184h1v1h-1zM26 198h1v1h-1zM44 198h1v1h-1zM56 198h1v1h-1zM59 198h1v1h-1zM66 198h1v1h-1zM78 198h1v1h-1zM79 198h1v1h-1zM11 206h1v1h-1zM21 206h1v1h-1zM34 206h1v1h-1zM36 206h1v1h-1zM20 208h1v1h-1zM33 208h1v1h-1zM75 208h1v1h-1zM76 208h1v1h-1zM8 210h1v1h-1zM18 214h1v1h-1zM12 218h1v1h-1zM15 218h1v1h-1zM18 218h1v1h-1zM22 218h1v1h-1zM32 218h1v1h-1zM35 218h1v1h-1zM36 218h1v1h-1zM37 218h1v1h-1zM39 218h1v1h-1zM33 224h1v1h-1zM41 224h1v1h-1zM59 224h1v1h-1zM65 224h1v1h-1zM67 224h1v1h-1zM68 224h1v1h-1zM90 224h1v1h-1zM91 224h1v1h-1zM92 224h1v1h-1zM15 228h1v1h-1zM21 228h1v1h-1zM28 228h1v1h-1zM29 228h1v1h-1zM40 228h1v1h-1zM42 228h1v1h-1zM43 228h1v1h-1zM64 228h1v1h-1zM66 228h1v1h-1zM24 230h1v1h-1zM12 232h1v1h-1zM32 240h1v1h-1zM39 240h1v1h-1zM64 240h1v1h-1zM70 240h1v1h-1zM72 240h1v1h-1zM73 240h1v1h-1zM95 240h1v1h-1zM96 240h1v1h-1zM104 240h1v1h-1zM15 244h1v1h-1zM21 244h1v1h-1zM22 244h1v1h-1zM37 244h1v1h-1zM38 244h1v1h-1zM51 244h1v1h-1zM53 244h1v1h-1zM35 260h1v1h-1zM43 260h1v1h-1zM45 260h1v1h-1zM65 260h1v1h-1zM66 260h1v1h-1zM67 260h1v1h-1zM74 260h1v1h-1zM77 260h1v1h-1zM78 260h1v1h-1zM32 270h1v1h-1zM39 270h1v1h-1zM46 270h1v1h-1zM47 270h1v1h-1zM57 270h1v1h-1zM58 270h1v1h-1zM19 272h1v1h-1zM27 272h1v1h-1zM35 272h1v1h-1zM54 272h1v1h-1zM55 272h1v1h-1zM57 272h1v1h-1zM26 274h1v1h-1zM72 274h1v1h-1zM85 274h1v1h-1zM98 274h1v1h-1zM107 274h1v1h-1zM108 274h1v1h-1zM16 276h1v1h-1zM23 276h1v1h-1zM26 278h1v1h-1zM57 278h1v1h-1zM58 278h1v1h-1zM16 280h1v1h-1zM12 282h1v1h-1zM19 282h1v1h-1zM12 286h1v1h-1zM8 288h1v1h-1zM4 290h1v1h-1zM10 294h1v1h-1zM25 294h1v1h-1zM26 294h1v1h-1zM0 296h1v1h-1z"/><path fill="#525252" transform="translate(0,1)" d="M16 50h1v1h-1zM19 50h1v1h-1zM51 56h1v1h-1zM53 56h1v1h-1zM4 58h1v1h-1zM12 58h1v1h-1zM14 58h1v1h-1zM16 58h1v1h-1zM32 58h1v1h-1zM52 58h1v1h-1zM0 60h1v1h-1zM1 60h1v1h-1zM20 64h1v1h-1zM40 64h1v1h-1zM50 64h1v1h-1zM52 64h1v1h-1zM26 68h1v1h-1zM51 68h1v1h-1zM52 68h1v1h-1zM53 68h1v1h-1zM7 72h1v1h-1zM21 72h1v1h-1zM22 72h1v1h-1zM25 72h1v1h-1zM27 72h1v1h-1zM16 74h1v1h-1zM29 74h1v1h-1zM69 74h1v1h-1zM70 74h1v1h-1zM4 76h1v1h-1zM7 94h1v1h-1zM30 94h1v1h-1zM42 94h1v1h-1zM45 94h1v1h-1zM56 94h1v1h-1zM79 94h1v1h-1zM91 94h1v1h-1zM92 94h1v1h-1zM98 94h1v1h-1zM109 94h1v1h-1zM111 94h1v1h-1zM16 96h1v1h-1zM29 96h1v1h-1zM59 96h1v1h-1zM60 96h1v1h-1zM4 98h1v1h-1zM7 104h1v1h-1zM25 104h1v1h-1zM37 104h1v1h-1zM39 104h1v1h-1zM42 104h1v1h-1zM44 104h1v1h-1zM16 106h1v1h-1zM29 106h1v1h-1zM66 106h1v1h-1zM67 106h1v1h-1zM4 108h1v1h-1zM10 112h1v1h-1zM38 112h1v1h-1zM39 112h1v1h-1zM12 116h1v1h-1zM0 118h1v1h-1zM8 122h1v1h-1zM17 122h1v1h-1zM24 122h1v1h-1zM25 122h1v1h-1zM30 122h1v1h-1zM32 122h1v1h-1zM7 126h1v1h-1zM20 126h1v1h-1zM25 126h1v1h-1zM31 126h1v1h-1zM33 126h1v1h-1zM36 126h1v1h-1zM38 126h1v1h-1zM16 128h1v1h-1zM29 128h1v1h-1zM50 128h1v1h-1zM51 128h1v1h-1zM4 130h1v1h-1zM27 134h1v1h-1zM30 134h1v1h-1zM27 136h1v1h-1zM30 136h1v1h-1zM25 142h1v1h-1zM37 142h1v1h-1zM51 142h1v1h-1zM65 142h1v1h-1zM67 142h1v1h-1zM85 142h1v1h-1zM86 142h1v1h-1zM23 160h1v1h-1zM34 160h1v1h-1zM59 160h1v1h-1zM71 160h1v1h-1zM82 160h1v1h-1zM85 160h1v1h-1zM88 160h1v1h-1zM7 164h1v1h-1zM18 164h1v1h-1zM19 164h1v1h-1zM25 164h1v1h-1zM27 164h1v1h-1zM16 166h1v1h-1zM29 166h1v1h-1zM61 166h1v1h-1zM62 166h1v1h-1zM4 168h1v1h-1zM13 174h1v1h-1zM23 174h1v1h-1zM24 174h1v1h-1zM9 180h1v1h-1zM11 180h1v1h-1zM13 180h1v1h-1zM24 184h1v1h-1zM30 184h1v1h-1zM42 184h1v1h-1zM43 184h1v1h-1zM26 198h1v1h-1zM44 198h1v1h-1zM56 198h1v1h-1zM59 198h1v1h-1zM66 198h1v1h-1zM78 198h1v1h-1zM79 198h1v1h-1zM11 206h1v1h-1zM21 206h1v1h-1zM34 206h1v1h-1zM36 206h1v1h-1zM20 208h1v1h-1zM33 208h1v1h-1zM75 208h1v1h-1zM76 208h1v1h-1zM8 210h1v1h-1zM18 214h1v1h-1zM12 218h1v1h-1zM15 218h1v1h-1zM18 218h1v1h-1zM22 218h1v1h-1zM32 218h1v1h-1zM35 218h1v1h-1zM36 218h1v1h-1zM37 218h1v1h-1zM39 218h1v1h-1zM33 224h1v1h-1zM41 224h1v1h-1zM59 224h1v1h-1zM65 224h1v1h-1zM67 224h1v1h-1zM68 224h1v1h-1zM90 224h1v1h-1zM91 224h1v1h-1zM92 224h1v1h-1zM15 228h1v1h-1zM21 228h1v1h-1zM28 228h1v1h-1zM29 228h1v1h-1zM40 228h1v1h-1zM42 228h1v1h-1zM43 228h1v1h-1zM64 228h1v1h-1zM66 228h1v1h-1zM24 230h1v1h-1zM12 232h1v1h-1zM32 240h1v1h-1zM39 240h1v1h-1zM64 240h1v1h-1zM70 240h1v1h-1zM72 240h1v1h-1zM73 240h1v1h-1zM95 240h1v1h-1zM96 240h1v1h-1zM104 240h1v1h-1zM15 244h1v1h-1zM21 244h1v1h-1zM22 244h1v1h-1zM37 244h1v1h-1zM38 244h1v1h-1zM51 244h1v1h-1zM53 244h1v1h-1zM35 260h1v1h-1zM43 260h1v1h-1zM45 260h1v1h-1zM65 260h1v1h-1zM66 260h1v1h-1zM67 260h1v1h-1zM74 260h1v1h-1zM77 260h1v1h-1zM78 260h1v1h-1zM32 270h1v1h-1zM39 270h1v1h-1zM46 270h1v1h-1zM47 270h1v1h-1zM57 270h1v1h-1zM58 270h1v1h-1zM19 272h1v1h-1zM27 272h1v1h-1zM35 272h1v1h-1zM54 272h1v1h-1zM55 272h1v1h-1zM57 272h1v1h-1zM26 274h1v1h-1zM72 274h1v1h-1zM85 274h1v1h-1zM98 274h1v1h-1zM107 274h1v1h-1zM108 274h1v1h-1zM16 276h1v1h-1zM23 276h1v1h-1zM26 278h1v1h-1zM57 278h1v1h-1zM58 278h1v1h-1zM16 280h1v1h-1zM12 282h1v1h-1zM19 282h1v1h-1zM12 286h1v1h-1zM8 288h1v1h-1zM4 290h1v1h-1zM10 294h1v1h-1zM25 294h1v1h-1zM26 294h1v1h-1zM0 296h1v1h-1z"/><path fill="#3c8879" d="M20 56h12v1h-12zM28 64h11v1h-11zM4 68h8v1h-8zM11 160h11v1h-11zM15 184h8v1h-8zM8 198h8v1h-8zM8 214h8v1h-8zM19 224h13v1h-13zM77 224h13v1h-13zM19 240h12v1h-12zM82 240h12v1h-12zM23 260h11v1h-11zM53 260h11v1h-11zM16 270h8v1h-8zM43 272h11v1h-11z"/><path fill="#2c4f48" transform="translate(0,1)" d="M20 56h12v1h-12zM28 64h11v1h-11zM4 68h8v1h-8zM11 160h11v1h-11zM15 184h8v1h-8zM8 198h8v1h-8zM8 214h8v1h-8zM19 224h13v1h-13zM77 224h13v1h-13zM19 240h12v1h-12zM82 240h12v1h-12zM23 260h11v1h-11zM53 260h11v1h-11zM16 270h8v1h-8zM43 272h11v1h-11z"/><path fill="#949475" d="M11 64h9v1h-9zM28 68h23v1h-23zM8 74h8v1h-8zM8 94h22v1h-22zM58 94h21v1h-21zM8 96h8v1h-8zM8 104h17v1h-17zM8 106h8v1h-8zM4 112h6v1h-6zM4 122h4v1h-4zM8 126h12v1h-12zM8 128h8v1h-8zM4 142h21v1h-21zM36 160h23v1h-23zM8 166h8v1h-8zM4 174h9v1h-9zM28 198h16v1h-16zM12 208h8v1h-8zM16 228h5v1h-5zM34 270h5v1h-5zM20 274h6v1h-6zM20 278h6v1h-6zM4 294h6v1h-6z"/><path fill="#545446" transform="translate(0,1)" d="M11 64h9v1h-9zM28 68h23v1h-23zM8 74h8v1h-8zM8 94h22v1h-22zM58 94h21v1h-21zM8 96h8v1h-8zM8 104h17v1h-17zM8 106h8v1h-8zM4 112h6v1h-6zM4 122h4v1h-4zM8 126h12v1h-12zM8 128h8v1h-8zM4 142h21v1h-21zM36 160h23v1h-23zM8 166h8v1h-8zM4 174h9v1h-9zM28 198h16v1h-16zM12 208h8v1h-8zM16 228h5v1h-5zM34 270h5v1h-5zM20 274h6v1h-6zM20 278h6v1h-6zM4 294h6v1h-6z"/></svg>
<div class="a" style="left:1788px;top:351px;width:2px;height:4px;background:#0c82ea"></div>
<div class="a" style="left:1788px;top:366px;width:2px;height:3px;background:#0c82ea"></div>
<div class="a" style="left:1788px;top:411px;width:2px;height:4px;background:#0c82ea"></div>
<div class="a" style="left:185px;top:754px;width:1296px;height:12px;background:rgba(121,121,121,0.4)"></div>
<div class="a" style="left:1785px;top:139px;width:1px;height:627px;background:#181818"></div>
<div class="a" style="left:1907px;top:504px;width:4px;height:7px;background:#106ec1"></div>
<div class="a" style="left:1907px;top:530px;width:4px;height:6px;background:#106ec1"></div>
<div class="a" style="left:1907px;top:607px;width:4px;height:7px;background:#106ec1"></div>
<div class="a" style="left:1906px;top:480px;width:14px;height:113px;background:rgba(121,121,121,0.4)"></div>
<div class="a" style="left:1907px;top:582px;width:13px;height:2px;background:#a0a0a0"></div>
<div class="a" style="left:1906px;top:139px;width:1px;height:627px;background:#151515"></div>
<div class="a" style="left:115px;top:766px;width:1805px;height:413px;background:#181818;border-top:1px solid #2b2b2b"></div>
<div class="a" style="left:135px;top:778px;font-size:10.4px;color:#9d9d9d">PROBLEMS</div>
<div class="a" style="left:216px;top:778px;font-size:10.4px;color:#9d9d9d">OUTPUT</div>
<div class="a" style="left:282px;top:778px;font-size:10.4px;color:#9d9d9d">DEBUG CONSOLE</div>
<div class="a" style="left:395px;top:778px;font-size:10.4px;color:#e7e7e7">TERMINAL</div>
<div class="a" style="left:471px;top:778px;font-size:10.4px;color:#9d9d9d">PORTS</div>
<div class="a" style="left:393px;top:794px;width:57px;height:1px;background:#0078d4"></div>
<svg class="a" style="left:1653px;top:776px" width="16" height="16" viewBox="0 0 16 16" fill="none" stroke="#cccccc" stroke-width="0.9"><path d="M8 1.5l5.5 3v7L8 14.5l-5.5-3v-7z"/><path d="M8 8l5.5-3.5M8 8v6.5"/><path d="M8.2 14.5L13.5 11.5V4.5L8.2 8z" fill="#cccccc"/></svg>
<div class="a" style="left:1672px;top:777px;font-size:11.5px;color:#cccccc;word-spacing:-1px">bash - dpdk4</div>
<svg class="a" style="left:1745px;top:776px" width="16" height="16" viewBox="0 0 16 16" fill="none" stroke="#cccccc" stroke-width="1.1"><path d="M8 2v12M2 8h12"/></svg>
<svg class="a" style="left:1763px;top:778px" width="12" height="12" viewBox="0 0 16 16" fill="none" stroke="#cccccc" stroke-width="1.2"><path d="M3 6l5 5 5-5"/></svg>
<svg class="a" style="left:1785px;top:776px" width="16" height="16" viewBox="0 0 16 16" fill="none" stroke="#cccccc" stroke-width="1"><rect x="1.5" y="2.5" width="13" height="11" rx="0.5"/><path d="M8 2.5v11"/></svg>
<svg class="a" style="left:1811px;top:776px" width="16" height="16" viewBox="0 0 16 16" fill="none" stroke="#cccccc" stroke-width="1"><path d="M2.5 3.5h11M6 3.5V2h4v1.5M3.5 3.5l1 11h7l1-11M6.5 6v6M9.5 6v6"/></svg>
<svg class="a" style="left:1837px;top:776px" width="16" height="16" viewBox="0 0 16 16" fill="#cccccc"><circle cx="3" cy="8" r="1"/><circle cx="8" cy="8" r="1"/><circle cx="13" cy="8" r="1"/></svg>
<svg class="a" style="left:1863px;top:776px" width="16" height="16" viewBox="0 0 16 16" fill="none" stroke="#cccccc" stroke-width="1.1"><path d="M3 10.5l5-5 5 5"/></svg>
<svg class="a" style="left:1889px;top:776px" width="16" height="16" viewBox="0 0 16 16" fill="none" stroke="#cccccc" stroke-width="1.1"><path d="M3.5 3.5l9 9M12.5 3.5l-9 9"/></svg>
<div class="tl" style="left:135px;top:805px">root@ubuntu:/home/tianb/networks-d/dpdk4# ./build/hellodpdk</div>
<div class="tl" style="left:135px;top:822px">EAL: Detected 8 lcore(s)</div>
<div class="tl" style="left:135px;top:839px">EAL: Detected 1 NUMA nodes</div>
<div class="tl" style="left:135px;top:856px">EAL: Multi-process socket /var/run/dpdk/rte/mp_socket</div>
<div class="tl" style="left:135px;top:873px">EAL: Selected IOVA mode &#x27;PA&#x27;</div>
<div class="tl" style="left:135px;top:890px">EAL: No available hugepages reported in hugepages-1048576kB</div>
<div class="tl" style="left:135px;top:907px">EAL: Probing VFIO support...</div>
<div class="tl" style="left:135px;top:924px">EAL: VFIO support initialized</div>
<div class="tl" style="left:135px;top:941px">EAL: PCI device 0000:02:01.0 on NUMA socket -1</div>
<div class="tl" style="left:135px;top:958px">EAL:   Invalid NUMA socket, default to 0</div>
<div class="tl" style="left:135px;top:975px">EAL:   probe driver: 8086:100f net_e1000_em</div>
<div class="tl" style="left:135px;top:992px">EAL: PCI device 0000:03:00.0 on NUMA socket -1</div>
<div class="tl" style="left:135px;top:1009px">EAL:   Invalid NUMA socket, default to 0</div>
<div class="tl" style="left:135px;top:1026px">EAL:   probe driver: 15ad:7b0 net_vmxnet3</div>
<div class="tl" style="left:135px;top:1043px">Ethernet device started</div>
<div class="tl" style="left:135px;top:1060px">received UDP payload of length 10: &#x27;hello dpdk&#x27;</div>
<div class="tl" style="left:135px;top:1077px">received UDP payload of length 2: &#x27;hi&#x27;</div>
<div class="a" style="left:135px;top:1094px;width:9px;height:16px;border:1px solid #cccccc"></div>
<div class="a" style="left:944px;top:804px;width:13px;height:374px;border-left:1px solid #000;border-top:1px solid #000"></div>
<div class="a" style="left:957px;top:803px;width:1px;height:376px;background:#2b2b2b"></div>
<div class="a" style="left:965px;top:808px;width:8px;height:8px;border-radius:4px;background:#1b81a8"></div>
<div class="tl" style="left:978px;top:805px"><span style="color:#23d18b;font-weight:bold">tianb@ubuntu</span>:<span style="color:#3b8eea;font-weight:bold">~/networks-d/dpdk4</span>$ echo -n &quot;hello dpdk&quot; | nc -u -w1 192.168.238.135 50001</div>
<div class="a" style="left:965px;top:825px;width:8px;height:8px;border-radius:4px;background:#1b81a8"></div>
<div class="tl" style="left:978px;top:822px"><span style="color:#23d18b;font-weight:bold">tianb@ubuntu</span>:<span style="color:#3b8eea;font-weight:bold">~/networks-d/dpdk4</span>$ echo -n &quot;hi&quot; | nc -u -w1 192.168.238.135 50001</div>
<div class="a" style="left:965px;top:842px;width:8px;height:8px;border-radius:4px;border:1.3px solid #777"></div>
<div class="tl" style="left:978px;top:839px"><span style="color:#23d18b;font-weight:bold">tianb@ubuntu</span>:<span style="color:#3b8eea;font-weight:bold">~/networks-d/dpdk4</span>$ </div>
<div class="a" style="left:1255px;top:838px;width:9px;height:16px;border:1px solid #cccccc"></div>
<div class="a" style="left:1786px;top:804px;width:14px;height:374px;border-left:1px solid #000;border-top:1px solid #000"></div>
<div class="a" style="left:1787px;top:804px;width:4px;height:7px;background:#1b81a8"></div>
<div class="a" style="left:1787px;top:815px;width:4px;height:12px;background:#1b81a8"></div>
<div class="a" style="left:1787px;top:832px;width:4px;height:12px;background:#555"></div>
<div class="a" style="left:1800px;top:803px;width:1px;height:376px;background:#2b2b2b"></div>
<div class="a" style="left:1801px;top:823px;width:119px;height:22px;background:#37373d"></div>
<div class="a" style="left:1801px;top:823px;width:1px;height:22px;background:#0078d4"></div>
<svg class="a" style="left:1814px;top:812px" width="8" height="10" viewBox="0 0 8 10" fill="none" stroke="#dddddd" stroke-width="1"><path d="M1.5 10V1.5H6"/></svg>
<svg class="a" style="left:1814px;top:827px" width="8" height="10" viewBox="0 0 8 10" fill="none" stroke="#dddddd" stroke-width="1"><path d="M1.5 0V8.5H6"/></svg>
<svg class="a" style="left:1823px;top:804px" width="16" height="16" viewBox="0 0 16 16" fill="none" stroke="#cccccc" stroke-width="0.9"><path d="M8 1.5l5.5 3v7L8 14.5l-5.5-3v-7z"/><path d="M8.2 14.5L13.5 11.5V4.5L8.2 8z" fill="#cccccc"/></svg>
<svg class="a" style="left:1823px;top:826px" width="16" height="16" viewBox="0 0 16 16" fill="none" stroke="#cccccc" stroke-width="0.9"><path d="M8 1.5l5.5 3v7L8 14.5l-5.5-3v-7z"/><path d="M8.2 14.5L13.5 11.5V4.5L8.2 8z" fill="#cccccc"/></svg>
<div class="a" style="left:1843px;top:805px;font-size:13px;color:#cccccc">./build/h...</div>
<div class="a" style="left:1843px;top:827px;font-size:13px;color:#cccccc">bash <span style="color:#9d9d9d;font-size:12px">dpdk4</span></div>
<div class="a" style="left:67px;top:1178px;width:1853px;height:22px;background:#181818;border-top:1px solid #2b2b2b"></div>
<div class="a" style="left:67px;top:1179px;width:34px;height:21px;background:#0078d4"></div>
<svg class="a" style="left:76px;top:1182px" width="16" height="16" viewBox="0 0 16 16" fill="none" stroke="#ffffff" stroke-width="1.1"><path d="M4 4.5L8 8.5L4 12.5M12.5 1L8.5 5L12.5 9"/></svg>
<svg class="a" style="left:106px;top:1182px" width="14" height="16" viewBox="0 0 14 16" fill="none" stroke="#cccccc" stroke-width="1"><circle cx="4" cy="3.5" r="1.7"/><circle cx="4" cy="13" r="1.7"/><circle cx="11" cy="5.5" r="1.7"/><path d="M4 5.2v6.1M11 7.2c0 3-5 2.5-6.5 4.3"/></svg>
<div class="a" style="left:124px;top:1182px;font-size:11.8px;color:#cccccc;white-space:pre">main*+</div>
<svg class="a" style="left:167px;top:1182px" width="16" height="16" viewBox="0 0 16 16" fill="none" stroke="#cccccc" stroke-width="1"><path d="M2.5 8a5 5 0 0 1 9-3M13.5 8a5 5 0 0 1-9 3"/><path d="M9.5 4.8h2.5V2.3M6.5 11.2H4v2.5"/></svg>
<svg class="a" style="left:196px;top:1182px" width="14" height="16" viewBox="0 0 14 16" fill="none" stroke="#cccccc" stroke-width="1"><circle cx="7" cy="8" r="5.5"/><path d="M5 6l4 4M9 6l-4 4"/></svg>
<div class="a" style="left:213px;top:1182px;font-size:11.8px;color:#cccccc;white-space:pre">0</div>
<svg class="a" style="left:222px;top:1182px" width="14" height="16" viewBox="0 0 14 16" fill="none" stroke="#cccccc" stroke-width="1"><path d="M7 2.5L1.5 13.5h11z"/><path d="M7 6.5v3.5M7 11.3v1"/></svg>
<div class="a" style="left:240px;top:1182px;font-size:11.8px;color:#cccccc;white-space:pre">0</div>
<svg class="a" style="left:262px;top:1182px" width="14" height="16" viewBox="0 0 14 16" fill="none" stroke="#cccccc" stroke-width="1"><circle cx="7" cy="6.5" r="1.3"/><path d="M4.2 3.8a4 4 0 0 0 0 5.5M9.8 3.8a4 4 0 0 1 0 5.5M2.5 2a6.5 6.5 0 0 0 0 9M11.5 2a6.5 6.5 0 0 1 0 9M7 8l-2.5 6M7 8l2.5 6"/></svg>
<div class="a" style="left:279px;top:1182px;font-size:11.8px;color:#cccccc;white-space:pre">0</div>
<svg class="a" style="left:302px;top:1182px" width="14" height="16" viewBox="0 0 14 16" fill="none" stroke="#cccccc" stroke-width="1"><path d="M6 1.5h2l.4 1.8 1.3.6 1.6-1 1.4 1.4-1 1.6.6 1.3 1.7.4v2l-1.7.4-.6 1.3 1 1.6-1.4 1.4-1.6-1-1.3.6-.4 1.8H6l-.4-1.8-1.3-.6-1.6 1-1.4-1.4 1-1.6-.6-1.3L0 9V7l1.7-.4.6-1.3-1-1.6 1.4-1.4 1.6 1 1.3-.6z" transform="translate(0.5,0) scale(0.93)"/><circle cx="7" cy="8" r="1.8"/></svg>
<div class="a" style="left:319px;top:1182px;font-size:11.8px;color:#cccccc;white-space:pre">Build</div>
<svg class="a" style="left:362px;top:1182px" width="14" height="16" viewBox="0 0 14 16" fill="none" stroke="#cccccc" stroke-width="1"><ellipse cx="7" cy="9.5" rx="3.2" ry="4"/><path d="M4.5 6.5a2.5 2.5 0 0 1 5 0M3.8 9.5H1M10.2 9.5H13M2 5.5l2 1.5M12 5.5l-2 1.5M2 13.5l2-1.5M12 13.5l-2-1.5M7 6v7.5"/></svg>
<svg class="a" style="left:393px;top:1182px" width="14" height="16" viewBox="0 0 14 16" fill="none" stroke="#cccccc" stroke-width="1"><path d="M3 2.5l9 5.5-9 5.5z"/></svg>
<div class="a" style="left:422px;top:1182px;font-size:11.8px;color:#cccccc;white-space:pre">-- NORMAL -- recording @v</div>
<div class="a" style="left:1572px;top:1182px;font-size:11.8px;color:#cccccc;white-space:pre">Ln 130, Col 78</div>
<div class="a" style="left:1664px;top:1182px;font-size:11.8px;color:#cccccc;white-space:pre">Spaces: 4</div>
<div class="a" style="left:1730px;top:1182px;font-size:11.8px;color:#cccccc;white-space:pre">UTF-8</div>
<div class="a" style="left:1778px;top:1182px;font-size:11.8px;color:#cccccc;white-space:pre">LF</div>
<div class="a" style="left:1806px;top:1182px;font-size:11.8px;color:#cccccc;white-space:pre">{ }</div>
<div class="a" style="left:1825px;top:1182px;font-size:11.8px;color:#cccccc;white-space:pre">C</div>
<div class="a" style="left:1846px;top:1182px;font-size:11.8px;color:#cccccc;white-space:pre">Linux</div>
<svg class="a" style="left:1891px;top:1182px" width="16" height="16" viewBox="0 0 16 16" fill="none" stroke="#cccccc" stroke-width="1"><path d="M3 11.5V7a4 4 0 0 1 8 0v4.5l1.5 1.5h-11z"/><path d="M5.5 13.5a1.5 1.5 0 0 0 3 0"/><circle cx="11.5" cy="3.5" r="2.3" fill="#cccccc" stroke="#181818" stroke-width="0.8"/></svg>
</body></html>
